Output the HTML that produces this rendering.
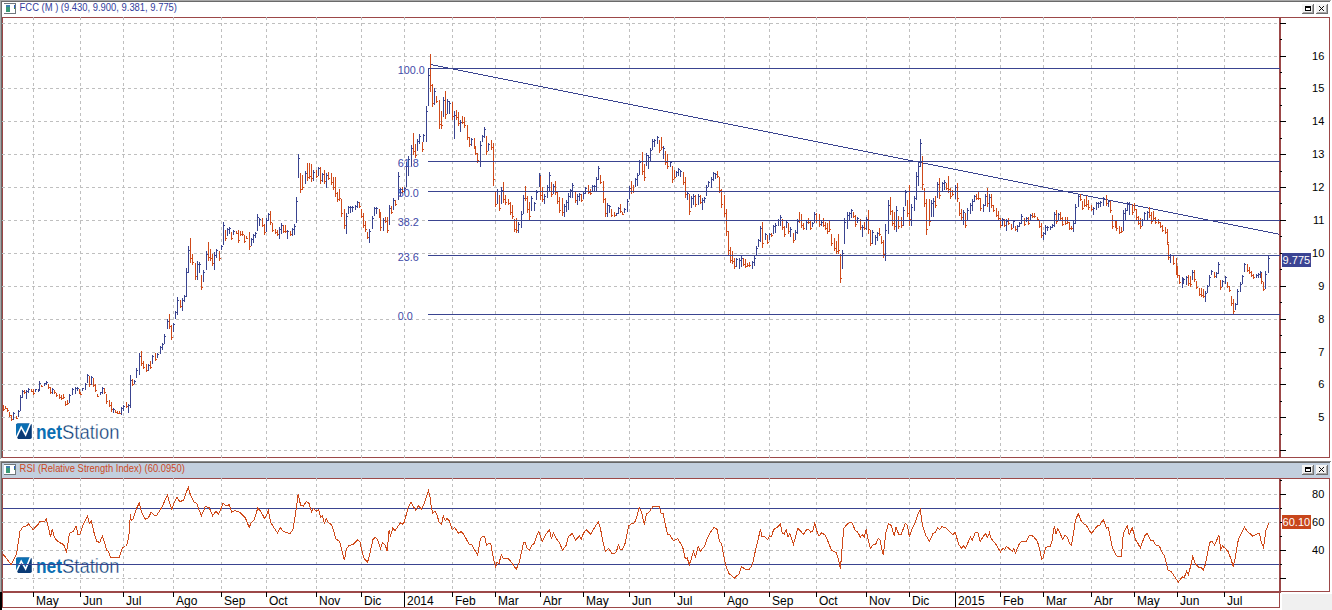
<!DOCTYPE html><html><head><meta charset="utf-8"><title>FCC chart</title>
<style>html,body{margin:0;padding:0;background:#fff;}body{width:1332px;height:610px;overflow:hidden;}svg{display:block;}text{font-family:"Liberation Sans", Arial, sans-serif;}</style></head><body>
<svg width="1332" height="610" viewBox="0 0 1332 610">
<rect width="1332" height="610" fill="#fff"/>
<rect x="1282" y="594" width="50" height="16" fill="#f0f0f0"/>
<g transform="translate(16,423.5)">
<path d="M1.6 0H14.2Q15.8 0 15.8 1.6V13.8Q15.8 15.4 14.2 15.4H1.9L0 12.4V1.6Q0 0 1.6 0Z" fill="#0a3b76"/>
<path d="M1.6 0H14.5L9.6 11.5L5.2 3.7L1.1 12.4L0 12.4V1.6Q0 0 1.6 0Z" fill="#0b6fb3"/>
<path d="M-0.4 15.6L5.2 3.7L9.6 11.5L14.6 -0.6" stroke="#fff" stroke-width="1.6" fill="none" stroke-linejoin="miter"/>
<path d="M-1 11.8L2.4 16.5H-1Z" fill="#fff"/>
</g>
<text x="36" y="438.6" font-size="20.5" font-weight="bold" fill="#0b6fb3" textLength="26" lengthAdjust="spacingAndGlyphs">net</text>
<text x="62" y="438.6" font-size="20.5" fill="#0a3b76" stroke="#fff" stroke-width="0.35" textLength="57.5" lengthAdjust="spacingAndGlyphs">Station</text>
<g transform="translate(16,557.5)">
<path d="M1.6 0H14.2Q15.8 0 15.8 1.6V13.8Q15.8 15.4 14.2 15.4H1.9L0 12.4V1.6Q0 0 1.6 0Z" fill="#0a3b76"/>
<path d="M1.6 0H14.5L9.6 11.5L5.2 3.7L1.1 12.4L0 12.4V1.6Q0 0 1.6 0Z" fill="#0b6fb3"/>
<path d="M-0.4 15.6L5.2 3.7L9.6 11.5L14.6 -0.6" stroke="#fff" stroke-width="1.6" fill="none" stroke-linejoin="miter"/>
<path d="M-1 11.8L2.4 16.5H-1Z" fill="#fff"/>
</g>
<text x="36" y="572.6" font-size="20.5" font-weight="bold" fill="#0b6fb3" textLength="26" lengthAdjust="spacingAndGlyphs">net</text>
<text x="62" y="572.6" font-size="20.5" fill="#0a3b76" stroke="#fff" stroke-width="0.35" textLength="57.5" lengthAdjust="spacingAndGlyphs">Station</text>
<g shape-rendering="crispEdges">
<rect x="0" y="0" width="1331" height="1" fill="#a8a8a8"/><rect x="1" y="1" width="1329" height="1" fill="#6a6a6a"/>
<rect x="0" y="0" width="1" height="459" fill="#a8a8a8"/><rect x="1" y="1" width="1" height="457" fill="#6a6a6a"/>
<rect x="0" y="461" width="1331" height="1" fill="#8a8a8a"/><rect x="1" y="462" width="1329" height="1" fill="#666"/>
<rect x="0" y="461" width="1" height="131" fill="#a8a8a8"/><rect x="1" y="462" width="1" height="130" fill="#6a6a6a"/>
<rect x="0" y="592" width="2" height="18" fill="#000"/>
<rect x="2" y="463" width="1328" height="15" fill="#c2cfde"/>
<rect x="2" y="17" width="1328" height="1" fill="#9c4848"/>
<rect x="2" y="457" width="1328" height="1" fill="#9c4848"/>
<rect x="2" y="17" width="1" height="441" fill="#9c4848"/>
<rect x="1329" y="17" width="1" height="441" fill="#9c4848"/>
<rect x="2" y="478" width="1328" height="1" fill="#9c4848"/>
<rect x="2" y="478" width="1" height="130" fill="#9c4848"/>
<rect x="1329" y="478" width="1" height="114" fill="#9c4848"/>
<rect x="2" y="591" width="1328" height="1" fill="#9c4848"/>
<rect x="2" y="592" width="1279" height="1" fill="#9c4848"/>
<rect x="2" y="607" width="1278" height="1" fill="#9c4848"/>
<rect x="1279" y="592" width="1" height="16" fill="#9c4848"/>
<line x1="2" y1="23.5" x2="1279" y2="23.5" stroke="#bfbfbf" stroke-dasharray="3 3" stroke-dashoffset="0"/>
<line x1="2" y1="56.5" x2="1279" y2="56.5" stroke="#bfbfbf" stroke-dasharray="3 3" stroke-dashoffset="0"/>
<line x1="2" y1="88.5" x2="1279" y2="88.5" stroke="#bfbfbf" stroke-dasharray="3 3" stroke-dashoffset="0"/>
<line x1="2" y1="121.5" x2="1279" y2="121.5" stroke="#bfbfbf" stroke-dasharray="3 3" stroke-dashoffset="0"/>
<line x1="2" y1="154.5" x2="1279" y2="154.5" stroke="#bfbfbf" stroke-dasharray="3 3" stroke-dashoffset="0"/>
<line x1="2" y1="187.5" x2="1279" y2="187.5" stroke="#bfbfbf" stroke-dasharray="3 3" stroke-dashoffset="0"/>
<line x1="2" y1="220.5" x2="1279" y2="220.5" stroke="#bfbfbf" stroke-dasharray="3 3" stroke-dashoffset="0"/>
<line x1="2" y1="253.5" x2="1279" y2="253.5" stroke="#bfbfbf" stroke-dasharray="3 3" stroke-dashoffset="0"/>
<line x1="2" y1="286.5" x2="1279" y2="286.5" stroke="#bfbfbf" stroke-dasharray="3 3" stroke-dashoffset="0"/>
<line x1="2" y1="319.5" x2="1279" y2="319.5" stroke="#bfbfbf" stroke-dasharray="3 3" stroke-dashoffset="0"/>
<line x1="2" y1="352.5" x2="1279" y2="352.5" stroke="#bfbfbf" stroke-dasharray="3 3" stroke-dashoffset="0"/>
<line x1="2" y1="384.5" x2="1279" y2="384.5" stroke="#bfbfbf" stroke-dasharray="3 3" stroke-dashoffset="0"/>
<line x1="2" y1="417.5" x2="1279" y2="417.5" stroke="#bfbfbf" stroke-dasharray="3 3" stroke-dashoffset="0"/>
<line x1="2" y1="450.5" x2="1279" y2="450.5" stroke="#bfbfbf" stroke-dasharray="3 3" stroke-dashoffset="0"/>
<line x1="33.5" y1="17" x2="33.5" y2="458" stroke="#bfbfbf" stroke-dasharray="3 3" stroke-dashoffset="0"/>
<line x1="33.5" y1="478" x2="33.5" y2="592" stroke="#bfbfbf" stroke-dasharray="3 3" stroke-dashoffset="0"/>
<line x1="80.5" y1="17" x2="80.5" y2="458" stroke="#bfbfbf" stroke-dasharray="3 3" stroke-dashoffset="0"/>
<line x1="80.5" y1="478" x2="80.5" y2="592" stroke="#bfbfbf" stroke-dasharray="3 3" stroke-dashoffset="0"/>
<line x1="123.5" y1="17" x2="123.5" y2="458" stroke="#bfbfbf" stroke-dasharray="3 3" stroke-dashoffset="0"/>
<line x1="123.5" y1="478" x2="123.5" y2="592" stroke="#bfbfbf" stroke-dasharray="3 3" stroke-dashoffset="0"/>
<line x1="173.5" y1="17" x2="173.5" y2="458" stroke="#bfbfbf" stroke-dasharray="3 3" stroke-dashoffset="0"/>
<line x1="173.5" y1="478" x2="173.5" y2="592" stroke="#bfbfbf" stroke-dasharray="3 3" stroke-dashoffset="0"/>
<line x1="221.5" y1="17" x2="221.5" y2="458" stroke="#bfbfbf" stroke-dasharray="3 3" stroke-dashoffset="0"/>
<line x1="221.5" y1="478" x2="221.5" y2="592" stroke="#bfbfbf" stroke-dasharray="3 3" stroke-dashoffset="0"/>
<line x1="266.5" y1="17" x2="266.5" y2="458" stroke="#bfbfbf" stroke-dasharray="3 3" stroke-dashoffset="0"/>
<line x1="266.5" y1="478" x2="266.5" y2="592" stroke="#bfbfbf" stroke-dasharray="3 3" stroke-dashoffset="0"/>
<line x1="316.5" y1="17" x2="316.5" y2="458" stroke="#bfbfbf" stroke-dasharray="3 3" stroke-dashoffset="0"/>
<line x1="316.5" y1="478" x2="316.5" y2="592" stroke="#bfbfbf" stroke-dasharray="3 3" stroke-dashoffset="0"/>
<line x1="361.5" y1="17" x2="361.5" y2="458" stroke="#bfbfbf" stroke-dasharray="3 3" stroke-dashoffset="0"/>
<line x1="361.5" y1="478" x2="361.5" y2="592" stroke="#bfbfbf" stroke-dasharray="3 3" stroke-dashoffset="0"/>
<line x1="404.5" y1="17" x2="404.5" y2="458" stroke="#bfbfbf" stroke-dasharray="3 3" stroke-dashoffset="0"/>
<line x1="404.5" y1="478" x2="404.5" y2="592" stroke="#bfbfbf" stroke-dasharray="3 3" stroke-dashoffset="0"/>
<line x1="452.5" y1="17" x2="452.5" y2="458" stroke="#bfbfbf" stroke-dasharray="3 3" stroke-dashoffset="0"/>
<line x1="452.5" y1="478" x2="452.5" y2="592" stroke="#bfbfbf" stroke-dasharray="3 3" stroke-dashoffset="0"/>
<line x1="495.5" y1="17" x2="495.5" y2="458" stroke="#bfbfbf" stroke-dasharray="3 3" stroke-dashoffset="0"/>
<line x1="495.5" y1="478" x2="495.5" y2="592" stroke="#bfbfbf" stroke-dasharray="3 3" stroke-dashoffset="0"/>
<line x1="540.5" y1="17" x2="540.5" y2="458" stroke="#bfbfbf" stroke-dasharray="3 3" stroke-dashoffset="0"/>
<line x1="540.5" y1="478" x2="540.5" y2="592" stroke="#bfbfbf" stroke-dasharray="3 3" stroke-dashoffset="0"/>
<line x1="583.5" y1="17" x2="583.5" y2="458" stroke="#bfbfbf" stroke-dasharray="3 3" stroke-dashoffset="0"/>
<line x1="583.5" y1="478" x2="583.5" y2="592" stroke="#bfbfbf" stroke-dasharray="3 3" stroke-dashoffset="0"/>
<line x1="629.5" y1="17" x2="629.5" y2="458" stroke="#bfbfbf" stroke-dasharray="3 3" stroke-dashoffset="0"/>
<line x1="629.5" y1="478" x2="629.5" y2="592" stroke="#bfbfbf" stroke-dasharray="3 3" stroke-dashoffset="0"/>
<line x1="674.5" y1="17" x2="674.5" y2="458" stroke="#bfbfbf" stroke-dasharray="3 3" stroke-dashoffset="0"/>
<line x1="674.5" y1="478" x2="674.5" y2="592" stroke="#bfbfbf" stroke-dasharray="3 3" stroke-dashoffset="0"/>
<line x1="724.5" y1="17" x2="724.5" y2="458" stroke="#bfbfbf" stroke-dasharray="3 3" stroke-dashoffset="0"/>
<line x1="724.5" y1="478" x2="724.5" y2="592" stroke="#bfbfbf" stroke-dasharray="3 3" stroke-dashoffset="0"/>
<line x1="769.5" y1="17" x2="769.5" y2="458" stroke="#bfbfbf" stroke-dasharray="3 3" stroke-dashoffset="0"/>
<line x1="769.5" y1="478" x2="769.5" y2="592" stroke="#bfbfbf" stroke-dasharray="3 3" stroke-dashoffset="0"/>
<line x1="816.5" y1="17" x2="816.5" y2="458" stroke="#bfbfbf" stroke-dasharray="3 3" stroke-dashoffset="0"/>
<line x1="816.5" y1="478" x2="816.5" y2="592" stroke="#bfbfbf" stroke-dasharray="3 3" stroke-dashoffset="0"/>
<line x1="866.5" y1="17" x2="866.5" y2="458" stroke="#bfbfbf" stroke-dasharray="3 3" stroke-dashoffset="0"/>
<line x1="866.5" y1="478" x2="866.5" y2="592" stroke="#bfbfbf" stroke-dasharray="3 3" stroke-dashoffset="0"/>
<line x1="909.5" y1="17" x2="909.5" y2="458" stroke="#bfbfbf" stroke-dasharray="3 3" stroke-dashoffset="0"/>
<line x1="909.5" y1="478" x2="909.5" y2="592" stroke="#bfbfbf" stroke-dasharray="3 3" stroke-dashoffset="0"/>
<line x1="955.5" y1="17" x2="955.5" y2="458" stroke="#bfbfbf" stroke-dasharray="3 3" stroke-dashoffset="0"/>
<line x1="955.5" y1="478" x2="955.5" y2="592" stroke="#bfbfbf" stroke-dasharray="3 3" stroke-dashoffset="0"/>
<line x1="1000.5" y1="17" x2="1000.5" y2="458" stroke="#bfbfbf" stroke-dasharray="3 3" stroke-dashoffset="0"/>
<line x1="1000.5" y1="478" x2="1000.5" y2="592" stroke="#bfbfbf" stroke-dasharray="3 3" stroke-dashoffset="0"/>
<line x1="1043.5" y1="17" x2="1043.5" y2="458" stroke="#bfbfbf" stroke-dasharray="3 3" stroke-dashoffset="0"/>
<line x1="1043.5" y1="478" x2="1043.5" y2="592" stroke="#bfbfbf" stroke-dasharray="3 3" stroke-dashoffset="0"/>
<line x1="1091.5" y1="17" x2="1091.5" y2="458" stroke="#bfbfbf" stroke-dasharray="3 3" stroke-dashoffset="0"/>
<line x1="1091.5" y1="478" x2="1091.5" y2="592" stroke="#bfbfbf" stroke-dasharray="3 3" stroke-dashoffset="0"/>
<line x1="1134.5" y1="17" x2="1134.5" y2="458" stroke="#bfbfbf" stroke-dasharray="3 3" stroke-dashoffset="0"/>
<line x1="1134.5" y1="478" x2="1134.5" y2="592" stroke="#bfbfbf" stroke-dasharray="3 3" stroke-dashoffset="0"/>
<line x1="1177.5" y1="17" x2="1177.5" y2="458" stroke="#bfbfbf" stroke-dasharray="3 3" stroke-dashoffset="0"/>
<line x1="1177.5" y1="478" x2="1177.5" y2="592" stroke="#bfbfbf" stroke-dasharray="3 3" stroke-dashoffset="0"/>
<line x1="1224.5" y1="17" x2="1224.5" y2="458" stroke="#bfbfbf" stroke-dasharray="3 3" stroke-dashoffset="0"/>
<line x1="1224.5" y1="478" x2="1224.5" y2="592" stroke="#bfbfbf" stroke-dasharray="3 3" stroke-dashoffset="0"/>
<line x1="2" y1="494.5" x2="1279" y2="494.5" stroke="#bfbfbf" stroke-dasharray="3 3"/>
<line x1="2" y1="522.5" x2="1279" y2="522.5" stroke="#bfbfbf" stroke-dasharray="3 3"/>
<line x1="2" y1="550.5" x2="1279" y2="550.5" stroke="#bfbfbf" stroke-dasharray="3 3"/>
<line x1="2" y1="578.5" x2="1279" y2="578.5" stroke="#bfbfbf" stroke-dasharray="3 3"/>
<rect x="1279" y="17" width="2" height="441" fill="#9c4848"/>
<rect x="1279" y="478" width="2" height="114" fill="#9c4848"/>
<rect x="1280" y="23" width="6" height="1" fill="#000"/>
<rect x="1280" y="56" width="6" height="1" fill="#000"/>
<rect x="1280" y="88" width="6" height="1" fill="#000"/>
<rect x="1280" y="121" width="6" height="1" fill="#000"/>
<rect x="1280" y="154" width="6" height="1" fill="#000"/>
<rect x="1280" y="187" width="6" height="1" fill="#000"/>
<rect x="1280" y="220" width="6" height="1" fill="#000"/>
<rect x="1280" y="253" width="6" height="1" fill="#000"/>
<rect x="1280" y="286" width="6" height="1" fill="#000"/>
<rect x="1280" y="319" width="6" height="1" fill="#000"/>
<rect x="1280" y="352" width="6" height="1" fill="#000"/>
<rect x="1280" y="384" width="6" height="1" fill="#000"/>
<rect x="1280" y="417" width="6" height="1" fill="#000"/>
<rect x="1280" y="450" width="6" height="1" fill="#000"/>
<rect x="1280" y="434" width="2" height="1" fill="#000"/>
<rect x="1280" y="401" width="2" height="1" fill="#000"/>
<rect x="1280" y="368" width="2" height="1" fill="#000"/>
<rect x="1280" y="335" width="2" height="1" fill="#000"/>
<rect x="1280" y="302" width="2" height="1" fill="#000"/>
<rect x="1280" y="269" width="2" height="1" fill="#000"/>
<rect x="1280" y="236" width="2" height="1" fill="#000"/>
<rect x="1280" y="203" width="2" height="1" fill="#000"/>
<rect x="1280" y="171" width="2" height="1" fill="#000"/>
<rect x="1280" y="138" width="2" height="1" fill="#000"/>
<rect x="1280" y="105" width="2" height="1" fill="#000"/>
<rect x="1280" y="72" width="2" height="1" fill="#000"/>
<rect x="1280" y="39" width="2" height="1" fill="#000"/>
<rect x="1280" y="494" width="6" height="1" fill="#000"/>
<rect x="1280" y="522" width="6" height="1" fill="#000"/>
<rect x="1280" y="550" width="6" height="1" fill="#000"/>
<rect x="1280" y="578" width="6" height="1" fill="#000"/>
<rect x="1280" y="480" width="2" height="1" fill="#000"/>
<rect x="1280" y="508" width="2" height="1" fill="#000"/>
<rect x="1280" y="536" width="2" height="1" fill="#000"/>
<rect x="1280" y="564" width="2" height="1" fill="#000"/>
<rect x="33" y="592" width="1" height="5" fill="#000"/>
<rect x="80" y="592" width="1" height="5" fill="#000"/>
<rect x="123" y="592" width="1" height="5" fill="#000"/>
<rect x="173" y="592" width="1" height="5" fill="#000"/>
<rect x="221" y="592" width="1" height="5" fill="#000"/>
<rect x="266" y="592" width="1" height="5" fill="#000"/>
<rect x="316" y="592" width="1" height="5" fill="#000"/>
<rect x="361" y="592" width="1" height="5" fill="#000"/>
<rect x="404" y="592" width="1" height="15" fill="#000"/>
<rect x="452" y="592" width="1" height="5" fill="#000"/>
<rect x="495" y="592" width="1" height="5" fill="#000"/>
<rect x="540" y="592" width="1" height="5" fill="#000"/>
<rect x="583" y="592" width="1" height="5" fill="#000"/>
<rect x="629" y="592" width="1" height="5" fill="#000"/>
<rect x="674" y="592" width="1" height="5" fill="#000"/>
<rect x="724" y="592" width="1" height="5" fill="#000"/>
<rect x="769" y="592" width="1" height="5" fill="#000"/>
<rect x="816" y="592" width="1" height="5" fill="#000"/>
<rect x="866" y="592" width="1" height="5" fill="#000"/>
<rect x="909" y="592" width="1" height="5" fill="#000"/>
<rect x="955" y="592" width="1" height="15" fill="#000"/>
<rect x="1000" y="592" width="1" height="5" fill="#000"/>
<rect x="1043" y="592" width="1" height="5" fill="#000"/>
<rect x="1091" y="592" width="1" height="5" fill="#000"/>
<rect x="1134" y="592" width="1" height="5" fill="#000"/>
<rect x="1177" y="592" width="1" height="5" fill="#000"/>
<rect x="1224" y="592" width="1" height="5" fill="#000"/>
<rect x="3" y="508" width="1276" height="1" fill="#3a4490"/>
<rect x="3" y="564" width="1276" height="1" fill="#3a4490"/>
<rect x="430" y="64" width="3" height="1" fill="#3a4490"/>
<rect x="433" y="65" width="5" height="1" fill="#3a4490"/>
<rect x="438" y="66" width="5" height="1" fill="#3a4490"/>
<rect x="443" y="67" width="5" height="1" fill="#3a4490"/>
<rect x="448" y="68" width="5" height="1" fill="#3a4490"/>
<rect x="453" y="69" width="5" height="1" fill="#3a4490"/>
<rect x="458" y="70" width="5" height="1" fill="#3a4490"/>
<rect x="463" y="71" width="5" height="1" fill="#3a4490"/>
<rect x="468" y="72" width="5" height="1" fill="#3a4490"/>
<rect x="473" y="73" width="5" height="1" fill="#3a4490"/>
<rect x="478" y="74" width="5" height="1" fill="#3a4490"/>
<rect x="483" y="75" width="5" height="1" fill="#3a4490"/>
<rect x="488" y="76" width="5" height="1" fill="#3a4490"/>
<rect x="493" y="77" width="5" height="1" fill="#3a4490"/>
<rect x="498" y="78" width="5" height="1" fill="#3a4490"/>
<rect x="503" y="79" width="5" height="1" fill="#3a4490"/>
<rect x="508" y="80" width="5" height="1" fill="#3a4490"/>
<rect x="513" y="81" width="5" height="1" fill="#3a4490"/>
<rect x="518" y="82" width="5" height="1" fill="#3a4490"/>
<rect x="523" y="83" width="5" height="1" fill="#3a4490"/>
<rect x="528" y="84" width="5" height="1" fill="#3a4490"/>
<rect x="533" y="85" width="5" height="1" fill="#3a4490"/>
<rect x="538" y="86" width="5" height="1" fill="#3a4490"/>
<rect x="543" y="87" width="5" height="1" fill="#3a4490"/>
<rect x="548" y="88" width="5" height="1" fill="#3a4490"/>
<rect x="553" y="89" width="5" height="1" fill="#3a4490"/>
<rect x="558" y="90" width="5" height="1" fill="#3a4490"/>
<rect x="563" y="91" width="5" height="1" fill="#3a4490"/>
<rect x="568" y="92" width="5" height="1" fill="#3a4490"/>
<rect x="573" y="93" width="5" height="1" fill="#3a4490"/>
<rect x="578" y="94" width="5" height="1" fill="#3a4490"/>
<rect x="583" y="95" width="5" height="1" fill="#3a4490"/>
<rect x="588" y="96" width="5" height="1" fill="#3a4490"/>
<rect x="593" y="97" width="5" height="1" fill="#3a4490"/>
<rect x="598" y="98" width="5" height="1" fill="#3a4490"/>
<rect x="603" y="99" width="5" height="1" fill="#3a4490"/>
<rect x="608" y="100" width="5" height="1" fill="#3a4490"/>
<rect x="613" y="101" width="5" height="1" fill="#3a4490"/>
<rect x="618" y="102" width="5" height="1" fill="#3a4490"/>
<rect x="623" y="103" width="5" height="1" fill="#3a4490"/>
<rect x="628" y="104" width="5" height="1" fill="#3a4490"/>
<rect x="633" y="105" width="5" height="1" fill="#3a4490"/>
<rect x="638" y="106" width="5" height="1" fill="#3a4490"/>
<rect x="643" y="107" width="5" height="1" fill="#3a4490"/>
<rect x="648" y="108" width="5" height="1" fill="#3a4490"/>
<rect x="653" y="109" width="5" height="1" fill="#3a4490"/>
<rect x="658" y="110" width="5" height="1" fill="#3a4490"/>
<rect x="663" y="111" width="5" height="1" fill="#3a4490"/>
<rect x="668" y="112" width="5" height="1" fill="#3a4490"/>
<rect x="673" y="113" width="5" height="1" fill="#3a4490"/>
<rect x="678" y="114" width="5" height="1" fill="#3a4490"/>
<rect x="683" y="115" width="5" height="1" fill="#3a4490"/>
<rect x="688" y="116" width="5" height="1" fill="#3a4490"/>
<rect x="693" y="117" width="5" height="1" fill="#3a4490"/>
<rect x="698" y="118" width="5" height="1" fill="#3a4490"/>
<rect x="703" y="119" width="5" height="1" fill="#3a4490"/>
<rect x="708" y="120" width="5" height="1" fill="#3a4490"/>
<rect x="713" y="121" width="5" height="1" fill="#3a4490"/>
<rect x="718" y="122" width="5" height="1" fill="#3a4490"/>
<rect x="723" y="123" width="5" height="1" fill="#3a4490"/>
<rect x="728" y="124" width="5" height="1" fill="#3a4490"/>
<rect x="733" y="125" width="5" height="1" fill="#3a4490"/>
<rect x="738" y="126" width="5" height="1" fill="#3a4490"/>
<rect x="743" y="127" width="5" height="1" fill="#3a4490"/>
<rect x="748" y="128" width="5" height="1" fill="#3a4490"/>
<rect x="753" y="129" width="5" height="1" fill="#3a4490"/>
<rect x="758" y="130" width="5" height="1" fill="#3a4490"/>
<rect x="763" y="131" width="5" height="1" fill="#3a4490"/>
<rect x="768" y="132" width="5" height="1" fill="#3a4490"/>
<rect x="773" y="133" width="5" height="1" fill="#3a4490"/>
<rect x="778" y="134" width="5" height="1" fill="#3a4490"/>
<rect x="783" y="135" width="5" height="1" fill="#3a4490"/>
<rect x="788" y="136" width="5" height="1" fill="#3a4490"/>
<rect x="793" y="137" width="5" height="1" fill="#3a4490"/>
<rect x="798" y="138" width="5" height="1" fill="#3a4490"/>
<rect x="803" y="139" width="5" height="1" fill="#3a4490"/>
<rect x="808" y="140" width="5" height="1" fill="#3a4490"/>
<rect x="813" y="141" width="5" height="1" fill="#3a4490"/>
<rect x="818" y="142" width="5" height="1" fill="#3a4490"/>
<rect x="823" y="143" width="5" height="1" fill="#3a4490"/>
<rect x="828" y="144" width="5" height="1" fill="#3a4490"/>
<rect x="833" y="145" width="5" height="1" fill="#3a4490"/>
<rect x="838" y="146" width="5" height="1" fill="#3a4490"/>
<rect x="843" y="147" width="5" height="1" fill="#3a4490"/>
<rect x="848" y="148" width="5" height="1" fill="#3a4490"/>
<rect x="853" y="149" width="5" height="1" fill="#3a4490"/>
<rect x="858" y="150" width="5" height="1" fill="#3a4490"/>
<rect x="863" y="151" width="5" height="1" fill="#3a4490"/>
<rect x="868" y="152" width="5" height="1" fill="#3a4490"/>
<rect x="873" y="153" width="5" height="1" fill="#3a4490"/>
<rect x="878" y="154" width="5" height="1" fill="#3a4490"/>
<rect x="883" y="155" width="5" height="1" fill="#3a4490"/>
<rect x="888" y="156" width="5" height="1" fill="#3a4490"/>
<rect x="893" y="157" width="5" height="1" fill="#3a4490"/>
<rect x="898" y="158" width="5" height="1" fill="#3a4490"/>
<rect x="903" y="159" width="5" height="1" fill="#3a4490"/>
<rect x="908" y="160" width="5" height="1" fill="#3a4490"/>
<rect x="913" y="161" width="5" height="1" fill="#3a4490"/>
<rect x="918" y="162" width="5" height="1" fill="#3a4490"/>
<rect x="923" y="163" width="5" height="1" fill="#3a4490"/>
<rect x="928" y="164" width="5" height="1" fill="#3a4490"/>
<rect x="933" y="165" width="5" height="1" fill="#3a4490"/>
<rect x="938" y="166" width="5" height="1" fill="#3a4490"/>
<rect x="943" y="167" width="5" height="1" fill="#3a4490"/>
<rect x="948" y="168" width="5" height="1" fill="#3a4490"/>
<rect x="953" y="169" width="5" height="1" fill="#3a4490"/>
<rect x="958" y="170" width="5" height="1" fill="#3a4490"/>
<rect x="963" y="171" width="5" height="1" fill="#3a4490"/>
<rect x="968" y="172" width="5" height="1" fill="#3a4490"/>
<rect x="973" y="173" width="5" height="1" fill="#3a4490"/>
<rect x="978" y="174" width="5" height="1" fill="#3a4490"/>
<rect x="983" y="175" width="5" height="1" fill="#3a4490"/>
<rect x="988" y="176" width="5" height="1" fill="#3a4490"/>
<rect x="993" y="177" width="5" height="1" fill="#3a4490"/>
<rect x="998" y="178" width="5" height="1" fill="#3a4490"/>
<rect x="1003" y="179" width="5" height="1" fill="#3a4490"/>
<rect x="1008" y="180" width="5" height="1" fill="#3a4490"/>
<rect x="1013" y="181" width="5" height="1" fill="#3a4490"/>
<rect x="1018" y="182" width="5" height="1" fill="#3a4490"/>
<rect x="1023" y="183" width="5" height="1" fill="#3a4490"/>
<rect x="1028" y="184" width="5" height="1" fill="#3a4490"/>
<rect x="1033" y="185" width="5" height="1" fill="#3a4490"/>
<rect x="1038" y="186" width="5" height="1" fill="#3a4490"/>
<rect x="1043" y="187" width="5" height="1" fill="#3a4490"/>
<rect x="1048" y="188" width="5" height="1" fill="#3a4490"/>
<rect x="1053" y="189" width="5" height="1" fill="#3a4490"/>
<rect x="1058" y="190" width="5" height="1" fill="#3a4490"/>
<rect x="1063" y="191" width="5" height="1" fill="#3a4490"/>
<rect x="1068" y="192" width="5" height="1" fill="#3a4490"/>
<rect x="1073" y="193" width="5" height="1" fill="#3a4490"/>
<rect x="1078" y="194" width="5" height="1" fill="#3a4490"/>
<rect x="1083" y="195" width="5" height="1" fill="#3a4490"/>
<rect x="1088" y="196" width="5" height="1" fill="#3a4490"/>
<rect x="1093" y="197" width="5" height="1" fill="#3a4490"/>
<rect x="1098" y="198" width="5" height="1" fill="#3a4490"/>
<rect x="1103" y="199" width="5" height="1" fill="#3a4490"/>
<rect x="1108" y="200" width="5" height="1" fill="#3a4490"/>
<rect x="1113" y="201" width="5" height="1" fill="#3a4490"/>
<rect x="1118" y="202" width="5" height="1" fill="#3a4490"/>
<rect x="1123" y="203" width="5" height="1" fill="#3a4490"/>
<rect x="1128" y="204" width="5" height="1" fill="#3a4490"/>
<rect x="1133" y="205" width="5" height="1" fill="#3a4490"/>
<rect x="1138" y="206" width="5" height="1" fill="#3a4490"/>
<rect x="1143" y="207" width="5" height="1" fill="#3a4490"/>
<rect x="1148" y="208" width="5" height="1" fill="#3a4490"/>
<rect x="1153" y="209" width="5" height="1" fill="#3a4490"/>
<rect x="1158" y="210" width="5" height="1" fill="#3a4490"/>
<rect x="1163" y="211" width="5" height="1" fill="#3a4490"/>
<rect x="1168" y="212" width="5" height="1" fill="#3a4490"/>
<rect x="1173" y="213" width="5" height="1" fill="#3a4490"/>
<rect x="1178" y="214" width="5" height="1" fill="#3a4490"/>
<rect x="1183" y="215" width="5" height="1" fill="#3a4490"/>
<rect x="1188" y="216" width="5" height="1" fill="#3a4490"/>
<rect x="1193" y="217" width="5" height="1" fill="#3a4490"/>
<rect x="1198" y="218" width="5" height="1" fill="#3a4490"/>
<rect x="1203" y="219" width="5" height="1" fill="#3a4490"/>
<rect x="1208" y="220" width="5" height="1" fill="#3a4490"/>
<rect x="1213" y="221" width="5" height="1" fill="#3a4490"/>
<rect x="1218" y="222" width="5" height="1" fill="#3a4490"/>
<rect x="1223" y="223" width="5" height="1" fill="#3a4490"/>
<rect x="1228" y="224" width="5" height="1" fill="#3a4490"/>
<rect x="1233" y="225" width="5" height="1" fill="#3a4490"/>
<rect x="1238" y="226" width="5" height="1" fill="#3a4490"/>
<rect x="1243" y="227" width="5" height="1" fill="#3a4490"/>
<rect x="1248" y="228" width="5" height="1" fill="#3a4490"/>
<rect x="1253" y="229" width="5" height="1" fill="#3a4490"/>
<rect x="1258" y="230" width="5" height="1" fill="#3a4490"/>
<rect x="1263" y="231" width="5" height="1" fill="#3a4490"/>
<rect x="1268" y="232" width="5" height="1" fill="#3a4490"/>
<rect x="1273" y="233" width="5" height="1" fill="#3a4490"/>
<rect x="1278" y="234" width="1" height="1" fill="#3a4490"/>
<rect x="3" y="405" width="1" height="6" fill="#cf4a1a"/>
<rect x="4" y="409" width="1" height="1" fill="#cf4a1a"/>
<rect x="5" y="406" width="1" height="3" fill="#cf4a1a"/>
<rect x="6" y="408" width="1" height="1" fill="#cf4a1a"/>
<rect x="7" y="408" width="1" height="4" fill="#cf4a1a"/>
<rect x="8" y="410" width="1" height="1" fill="#cf4a1a"/>
<rect x="9" y="412" width="1" height="5" fill="#cf4a1a"/>
<rect x="10" y="415" width="1" height="1" fill="#cf4a1a"/>
<rect x="11" y="415" width="1" height="6" fill="#cf4a1a"/>
<rect x="12" y="419" width="1" height="1" fill="#cf4a1a"/>
<rect x="13" y="412" width="1" height="8" fill="#3a4490"/>
<rect x="14" y="413" width="1" height="1" fill="#3a4490"/>
<rect x="16" y="416" width="1" height="3" fill="#cf4a1a"/>
<rect x="17" y="418" width="1" height="1" fill="#cf4a1a"/>
<rect x="18" y="410" width="1" height="7" fill="#3a4490"/>
<rect x="19" y="411" width="1" height="1" fill="#3a4490"/>
<rect x="20" y="395" width="1" height="16" fill="#3a4490"/>
<rect x="21" y="397" width="1" height="1" fill="#3a4490"/>
<rect x="22" y="390" width="1" height="8" fill="#3a4490"/>
<rect x="23" y="391" width="1" height="1" fill="#3a4490"/>
<rect x="24" y="390" width="1" height="4" fill="#cf4a1a"/>
<rect x="25" y="392" width="1" height="1" fill="#cf4a1a"/>
<rect x="26" y="390" width="1" height="9" fill="#3a4490"/>
<rect x="27" y="391" width="1" height="1" fill="#3a4490"/>
<rect x="28" y="388" width="1" height="5" fill="#3a4490"/>
<rect x="29" y="389" width="1" height="1" fill="#3a4490"/>
<rect x="31" y="389" width="1" height="3" fill="#cf4a1a"/>
<rect x="32" y="391" width="1" height="1" fill="#cf4a1a"/>
<rect x="33" y="389" width="1" height="6" fill="#cf4a1a"/>
<rect x="34" y="393" width="1" height="1" fill="#cf4a1a"/>
<rect x="35" y="389" width="1" height="3" fill="#3a4490"/>
<rect x="36" y="389" width="1" height="1" fill="#3a4490"/>
<rect x="38" y="389" width="1" height="3" fill="#3a4490"/>
<rect x="39" y="389" width="1" height="1" fill="#3a4490"/>
<rect x="39" y="381" width="1" height="10" fill="#3a4490"/>
<rect x="40" y="383" width="1" height="1" fill="#3a4490"/>
<rect x="41" y="385" width="1" height="2" fill="#cf4a1a"/>
<rect x="42" y="386" width="1" height="1" fill="#cf4a1a"/>
<rect x="44" y="383" width="1" height="3" fill="#3a4490"/>
<rect x="45" y="383" width="1" height="1" fill="#3a4490"/>
<rect x="46" y="381" width="1" height="4" fill="#3a4490"/>
<rect x="47" y="382" width="1" height="1" fill="#3a4490"/>
<rect x="48" y="384" width="1" height="5" fill="#cf4a1a"/>
<rect x="49" y="387" width="1" height="1" fill="#cf4a1a"/>
<rect x="50" y="387" width="1" height="7" fill="#cf4a1a"/>
<rect x="51" y="392" width="1" height="1" fill="#cf4a1a"/>
<rect x="52" y="388" width="1" height="6" fill="#3a4490"/>
<rect x="53" y="389" width="1" height="1" fill="#3a4490"/>
<rect x="54" y="390" width="1" height="4" fill="#cf4a1a"/>
<rect x="55" y="392" width="1" height="1" fill="#cf4a1a"/>
<rect x="56" y="393" width="1" height="4" fill="#cf4a1a"/>
<rect x="57" y="395" width="1" height="1" fill="#cf4a1a"/>
<rect x="59" y="394" width="1" height="5" fill="#cf4a1a"/>
<rect x="60" y="397" width="1" height="1" fill="#cf4a1a"/>
<rect x="61" y="395" width="1" height="5" fill="#cf4a1a"/>
<rect x="62" y="398" width="1" height="1" fill="#cf4a1a"/>
<rect x="63" y="394" width="1" height="5" fill="#cf4a1a"/>
<rect x="64" y="397" width="1" height="1" fill="#cf4a1a"/>
<rect x="65" y="401" width="1" height="5" fill="#cf4a1a"/>
<rect x="66" y="404" width="1" height="1" fill="#cf4a1a"/>
<rect x="67" y="400" width="1" height="5" fill="#cf4a1a"/>
<rect x="68" y="403" width="1" height="1" fill="#cf4a1a"/>
<rect x="69" y="394" width="1" height="9" fill="#3a4490"/>
<rect x="70" y="395" width="1" height="1" fill="#3a4490"/>
<rect x="72" y="388" width="1" height="7" fill="#3a4490"/>
<rect x="73" y="389" width="1" height="1" fill="#3a4490"/>
<rect x="75" y="387" width="1" height="7" fill="#3a4490"/>
<rect x="76" y="388" width="1" height="1" fill="#3a4490"/>
<rect x="77" y="387" width="1" height="4" fill="#3a4490"/>
<rect x="78" y="388" width="1" height="1" fill="#3a4490"/>
<rect x="79" y="389" width="1" height="5" fill="#cf4a1a"/>
<rect x="80" y="392" width="1" height="1" fill="#cf4a1a"/>
<rect x="80" y="392" width="1" height="3" fill="#cf4a1a"/>
<rect x="81" y="394" width="1" height="1" fill="#cf4a1a"/>
<rect x="82" y="388" width="1" height="3" fill="#3a4490"/>
<rect x="83" y="388" width="1" height="1" fill="#3a4490"/>
<rect x="85" y="383" width="1" height="7" fill="#3a4490"/>
<rect x="86" y="384" width="1" height="1" fill="#3a4490"/>
<rect x="87" y="374" width="1" height="9" fill="#3a4490"/>
<rect x="88" y="375" width="1" height="1" fill="#3a4490"/>
<rect x="89" y="376" width="1" height="11" fill="#cf4a1a"/>
<rect x="90" y="384" width="1" height="1" fill="#cf4a1a"/>
<rect x="91" y="376" width="1" height="9" fill="#3a4490"/>
<rect x="92" y="377" width="1" height="1" fill="#3a4490"/>
<rect x="93" y="378" width="1" height="9" fill="#cf4a1a"/>
<rect x="94" y="385" width="1" height="1" fill="#cf4a1a"/>
<rect x="95" y="384" width="1" height="8" fill="#cf4a1a"/>
<rect x="96" y="390" width="1" height="1" fill="#cf4a1a"/>
<rect x="97" y="394" width="1" height="3" fill="#cf4a1a"/>
<rect x="98" y="396" width="1" height="1" fill="#cf4a1a"/>
<rect x="100" y="392" width="1" height="3" fill="#3a4490"/>
<rect x="101" y="392" width="1" height="1" fill="#3a4490"/>
<rect x="102" y="387" width="1" height="7" fill="#3a4490"/>
<rect x="103" y="388" width="1" height="1" fill="#3a4490"/>
<rect x="104" y="388" width="1" height="6" fill="#cf4a1a"/>
<rect x="105" y="392" width="1" height="1" fill="#cf4a1a"/>
<rect x="106" y="394" width="1" height="10" fill="#cf4a1a"/>
<rect x="107" y="401" width="1" height="1" fill="#cf4a1a"/>
<rect x="109" y="400" width="1" height="7" fill="#cf4a1a"/>
<rect x="110" y="405" width="1" height="1" fill="#cf4a1a"/>
<rect x="111" y="402" width="1" height="10" fill="#cf4a1a"/>
<rect x="112" y="409" width="1" height="1" fill="#cf4a1a"/>
<rect x="113" y="408" width="1" height="5" fill="#3a4490"/>
<rect x="114" y="409" width="1" height="1" fill="#3a4490"/>
<rect x="115" y="410" width="1" height="3" fill="#cf4a1a"/>
<rect x="116" y="412" width="1" height="1" fill="#cf4a1a"/>
<rect x="117" y="411" width="1" height="3" fill="#cf4a1a"/>
<rect x="118" y="413" width="1" height="1" fill="#cf4a1a"/>
<rect x="119" y="411" width="1" height="3" fill="#cf4a1a"/>
<rect x="120" y="413" width="1" height="1" fill="#cf4a1a"/>
<rect x="121" y="407" width="1" height="8" fill="#3a4490"/>
<rect x="122" y="408" width="1" height="1" fill="#3a4490"/>
<rect x="123" y="405" width="1" height="6" fill="#3a4490"/>
<rect x="124" y="406" width="1" height="1" fill="#3a4490"/>
<rect x="126" y="402" width="1" height="6" fill="#cf4a1a"/>
<rect x="127" y="406" width="1" height="1" fill="#cf4a1a"/>
<rect x="128" y="404" width="1" height="9" fill="#3a4490"/>
<rect x="129" y="405" width="1" height="1" fill="#3a4490"/>
<rect x="130" y="375" width="1" height="33" fill="#3a4490"/>
<rect x="131" y="380" width="1" height="1" fill="#3a4490"/>
<rect x="132" y="379" width="1" height="7" fill="#cf4a1a"/>
<rect x="133" y="384" width="1" height="1" fill="#cf4a1a"/>
<rect x="134" y="380" width="1" height="4" fill="#3a4490"/>
<rect x="135" y="381" width="1" height="1" fill="#3a4490"/>
<rect x="136" y="368" width="1" height="10" fill="#3a4490"/>
<rect x="137" y="370" width="1" height="1" fill="#3a4490"/>
<rect x="139" y="353" width="1" height="22" fill="#3a4490"/>
<rect x="140" y="356" width="1" height="1" fill="#3a4490"/>
<rect x="141" y="351" width="1" height="15" fill="#cf4a1a"/>
<rect x="142" y="363" width="1" height="1" fill="#cf4a1a"/>
<rect x="143" y="361" width="1" height="8" fill="#cf4a1a"/>
<rect x="144" y="367" width="1" height="1" fill="#cf4a1a"/>
<rect x="146" y="364" width="1" height="8" fill="#cf4a1a"/>
<rect x="147" y="370" width="1" height="1" fill="#cf4a1a"/>
<rect x="148" y="364" width="1" height="7" fill="#3a4490"/>
<rect x="149" y="365" width="1" height="1" fill="#3a4490"/>
<rect x="150" y="361" width="1" height="8" fill="#cf4a1a"/>
<rect x="151" y="367" width="1" height="1" fill="#cf4a1a"/>
<rect x="152" y="355" width="1" height="9" fill="#3a4490"/>
<rect x="153" y="356" width="1" height="1" fill="#3a4490"/>
<rect x="155" y="353" width="1" height="8" fill="#cf4a1a"/>
<rect x="156" y="359" width="1" height="1" fill="#cf4a1a"/>
<rect x="157" y="353" width="1" height="5" fill="#3a4490"/>
<rect x="158" y="354" width="1" height="1" fill="#3a4490"/>
<rect x="160" y="346" width="1" height="8" fill="#3a4490"/>
<rect x="161" y="347" width="1" height="1" fill="#3a4490"/>
<rect x="162" y="343" width="1" height="7" fill="#3a4490"/>
<rect x="163" y="344" width="1" height="1" fill="#3a4490"/>
<rect x="164" y="334" width="1" height="10" fill="#3a4490"/>
<rect x="165" y="336" width="1" height="1" fill="#3a4490"/>
<rect x="167" y="319" width="1" height="10" fill="#3a4490"/>
<rect x="168" y="321" width="1" height="1" fill="#3a4490"/>
<rect x="169" y="314" width="1" height="15" fill="#cf4a1a"/>
<rect x="170" y="326" width="1" height="1" fill="#cf4a1a"/>
<rect x="171" y="325" width="1" height="15" fill="#cf4a1a"/>
<rect x="172" y="337" width="1" height="1" fill="#cf4a1a"/>
<rect x="173" y="323" width="1" height="9" fill="#3a4490"/>
<rect x="174" y="324" width="1" height="1" fill="#3a4490"/>
<rect x="175" y="311" width="1" height="8" fill="#3a4490"/>
<rect x="176" y="312" width="1" height="1" fill="#3a4490"/>
<rect x="177" y="297" width="1" height="18" fill="#3a4490"/>
<rect x="178" y="300" width="1" height="1" fill="#3a4490"/>
<rect x="180" y="300" width="1" height="8" fill="#cf4a1a"/>
<rect x="181" y="306" width="1" height="1" fill="#cf4a1a"/>
<rect x="182" y="298" width="1" height="13" fill="#3a4490"/>
<rect x="183" y="300" width="1" height="1" fill="#3a4490"/>
<rect x="184" y="295" width="1" height="7" fill="#3a4490"/>
<rect x="185" y="296" width="1" height="1" fill="#3a4490"/>
<rect x="186" y="268" width="1" height="29" fill="#3a4490"/>
<rect x="187" y="272" width="1" height="1" fill="#3a4490"/>
<rect x="188" y="246" width="1" height="27" fill="#3a4490"/>
<rect x="189" y="250" width="1" height="1" fill="#3a4490"/>
<rect x="190" y="238" width="1" height="25" fill="#cf4a1a"/>
<rect x="191" y="258" width="1" height="1" fill="#cf4a1a"/>
<rect x="192" y="254" width="1" height="11" fill="#cf4a1a"/>
<rect x="193" y="262" width="1" height="1" fill="#cf4a1a"/>
<rect x="195" y="263" width="1" height="17" fill="#cf4a1a"/>
<rect x="196" y="276" width="1" height="1" fill="#cf4a1a"/>
<rect x="197" y="261" width="1" height="19" fill="#3a4490"/>
<rect x="198" y="264" width="1" height="1" fill="#3a4490"/>
<rect x="199" y="262" width="1" height="11" fill="#3a4490"/>
<rect x="200" y="264" width="1" height="1" fill="#3a4490"/>
<rect x="201" y="275" width="1" height="15" fill="#cf4a1a"/>
<rect x="202" y="287" width="1" height="1" fill="#cf4a1a"/>
<rect x="203" y="270" width="1" height="12" fill="#3a4490"/>
<rect x="204" y="272" width="1" height="1" fill="#3a4490"/>
<rect x="206" y="251" width="1" height="19" fill="#3a4490"/>
<rect x="207" y="254" width="1" height="1" fill="#3a4490"/>
<rect x="208" y="242" width="1" height="19" fill="#cf4a1a"/>
<rect x="209" y="257" width="1" height="1" fill="#cf4a1a"/>
<rect x="210" y="249" width="1" height="12" fill="#cf4a1a"/>
<rect x="211" y="258" width="1" height="1" fill="#cf4a1a"/>
<rect x="212" y="254" width="1" height="12" fill="#cf4a1a"/>
<rect x="213" y="263" width="1" height="1" fill="#cf4a1a"/>
<rect x="214" y="252" width="1" height="18" fill="#3a4490"/>
<rect x="215" y="255" width="1" height="1" fill="#3a4490"/>
<rect x="216" y="249" width="1" height="9" fill="#3a4490"/>
<rect x="217" y="250" width="1" height="1" fill="#3a4490"/>
<rect x="219" y="251" width="1" height="10" fill="#cf4a1a"/>
<rect x="220" y="258" width="1" height="1" fill="#cf4a1a"/>
<rect x="221" y="245" width="1" height="5" fill="#3a4490"/>
<rect x="222" y="246" width="1" height="1" fill="#3a4490"/>
<rect x="223" y="222" width="1" height="23" fill="#3a4490"/>
<rect x="224" y="225" width="1" height="1" fill="#3a4490"/>
<rect x="225" y="230" width="1" height="11" fill="#cf4a1a"/>
<rect x="226" y="238" width="1" height="1" fill="#cf4a1a"/>
<rect x="227" y="228" width="1" height="8" fill="#3a4490"/>
<rect x="228" y="229" width="1" height="1" fill="#3a4490"/>
<rect x="229" y="227" width="1" height="7" fill="#3a4490"/>
<rect x="230" y="228" width="1" height="1" fill="#3a4490"/>
<rect x="231" y="232" width="1" height="8" fill="#cf4a1a"/>
<rect x="232" y="238" width="1" height="1" fill="#cf4a1a"/>
<rect x="233" y="230" width="1" height="5" fill="#3a4490"/>
<rect x="234" y="231" width="1" height="1" fill="#3a4490"/>
<rect x="236" y="231" width="1" height="3" fill="#cf4a1a"/>
<rect x="237" y="233" width="1" height="1" fill="#cf4a1a"/>
<rect x="238" y="230" width="1" height="13" fill="#cf4a1a"/>
<rect x="239" y="240" width="1" height="1" fill="#cf4a1a"/>
<rect x="240" y="231" width="1" height="5" fill="#cf4a1a"/>
<rect x="241" y="234" width="1" height="1" fill="#cf4a1a"/>
<rect x="242" y="231" width="1" height="5" fill="#cf4a1a"/>
<rect x="243" y="234" width="1" height="1" fill="#cf4a1a"/>
<rect x="244" y="235" width="1" height="8" fill="#cf4a1a"/>
<rect x="245" y="241" width="1" height="1" fill="#cf4a1a"/>
<rect x="246" y="236" width="1" height="3" fill="#cf4a1a"/>
<rect x="247" y="238" width="1" height="1" fill="#cf4a1a"/>
<rect x="249" y="232" width="1" height="18" fill="#cf4a1a"/>
<rect x="250" y="246" width="1" height="1" fill="#cf4a1a"/>
<rect x="251" y="238" width="1" height="8" fill="#3a4490"/>
<rect x="252" y="239" width="1" height="1" fill="#3a4490"/>
<rect x="253" y="234" width="1" height="9" fill="#3a4490"/>
<rect x="254" y="235" width="1" height="1" fill="#3a4490"/>
<rect x="255" y="232" width="1" height="6" fill="#3a4490"/>
<rect x="256" y="233" width="1" height="1" fill="#3a4490"/>
<rect x="257" y="214" width="1" height="17" fill="#3a4490"/>
<rect x="258" y="217" width="1" height="1" fill="#3a4490"/>
<rect x="259" y="218" width="1" height="8" fill="#3a4490"/>
<rect x="260" y="219" width="1" height="1" fill="#3a4490"/>
<rect x="262" y="218" width="1" height="9" fill="#cf4a1a"/>
<rect x="263" y="225" width="1" height="1" fill="#cf4a1a"/>
<rect x="264" y="224" width="1" height="11" fill="#cf4a1a"/>
<rect x="265" y="232" width="1" height="1" fill="#cf4a1a"/>
<rect x="266" y="218" width="1" height="14" fill="#3a4490"/>
<rect x="267" y="220" width="1" height="1" fill="#3a4490"/>
<rect x="268" y="213" width="1" height="8" fill="#3a4490"/>
<rect x="269" y="214" width="1" height="1" fill="#3a4490"/>
<rect x="270" y="211" width="1" height="14" fill="#cf4a1a"/>
<rect x="271" y="222" width="1" height="1" fill="#cf4a1a"/>
<rect x="272" y="223" width="1" height="9" fill="#cf4a1a"/>
<rect x="273" y="230" width="1" height="1" fill="#cf4a1a"/>
<rect x="275" y="229" width="1" height="5" fill="#cf4a1a"/>
<rect x="276" y="232" width="1" height="1" fill="#cf4a1a"/>
<rect x="277" y="230" width="1" height="6" fill="#cf4a1a"/>
<rect x="278" y="234" width="1" height="1" fill="#cf4a1a"/>
<rect x="279" y="227" width="1" height="12" fill="#3a4490"/>
<rect x="280" y="229" width="1" height="1" fill="#3a4490"/>
<rect x="281" y="223" width="1" height="11" fill="#3a4490"/>
<rect x="282" y="225" width="1" height="1" fill="#3a4490"/>
<rect x="283" y="225" width="1" height="8" fill="#cf4a1a"/>
<rect x="284" y="231" width="1" height="1" fill="#cf4a1a"/>
<rect x="285" y="225" width="1" height="8" fill="#cf4a1a"/>
<rect x="286" y="231" width="1" height="1" fill="#cf4a1a"/>
<rect x="287" y="230" width="1" height="9" fill="#3a4490"/>
<rect x="288" y="231" width="1" height="1" fill="#3a4490"/>
<rect x="290" y="231" width="1" height="5" fill="#cf4a1a"/>
<rect x="291" y="234" width="1" height="1" fill="#cf4a1a"/>
<rect x="292" y="228" width="1" height="8" fill="#3a4490"/>
<rect x="293" y="229" width="1" height="1" fill="#3a4490"/>
<rect x="294" y="224" width="1" height="11" fill="#3a4490"/>
<rect x="295" y="226" width="1" height="1" fill="#3a4490"/>
<rect x="296" y="197" width="1" height="26" fill="#3a4490"/>
<rect x="297" y="201" width="1" height="1" fill="#3a4490"/>
<rect x="298" y="154" width="1" height="24" fill="#3a4490"/>
<rect x="299" y="158" width="1" height="1" fill="#3a4490"/>
<rect x="300" y="173" width="1" height="20" fill="#cf4a1a"/>
<rect x="301" y="189" width="1" height="1" fill="#cf4a1a"/>
<rect x="302" y="175" width="1" height="15" fill="#cf4a1a"/>
<rect x="303" y="187" width="1" height="1" fill="#cf4a1a"/>
<rect x="305" y="171" width="1" height="13" fill="#3a4490"/>
<rect x="306" y="173" width="1" height="1" fill="#3a4490"/>
<rect x="307" y="163" width="1" height="18" fill="#cf4a1a"/>
<rect x="308" y="177" width="1" height="1" fill="#cf4a1a"/>
<rect x="309" y="163" width="1" height="16" fill="#cf4a1a"/>
<rect x="310" y="176" width="1" height="1" fill="#cf4a1a"/>
<rect x="311" y="164" width="1" height="18" fill="#cf4a1a"/>
<rect x="312" y="178" width="1" height="1" fill="#cf4a1a"/>
<rect x="313" y="170" width="1" height="11" fill="#3a4490"/>
<rect x="314" y="172" width="1" height="1" fill="#3a4490"/>
<rect x="316" y="170" width="1" height="8" fill="#cf4a1a"/>
<rect x="317" y="176" width="1" height="1" fill="#cf4a1a"/>
<rect x="318" y="167" width="1" height="9" fill="#3a4490"/>
<rect x="319" y="168" width="1" height="1" fill="#3a4490"/>
<rect x="320" y="167" width="1" height="17" fill="#cf4a1a"/>
<rect x="321" y="180" width="1" height="1" fill="#cf4a1a"/>
<rect x="322" y="173" width="1" height="9" fill="#3a4490"/>
<rect x="323" y="174" width="1" height="1" fill="#3a4490"/>
<rect x="324" y="170" width="1" height="14" fill="#cf4a1a"/>
<rect x="325" y="181" width="1" height="1" fill="#cf4a1a"/>
<rect x="326" y="173" width="1" height="15" fill="#3a4490"/>
<rect x="327" y="175" width="1" height="1" fill="#3a4490"/>
<rect x="328" y="172" width="1" height="8" fill="#cf4a1a"/>
<rect x="329" y="178" width="1" height="1" fill="#cf4a1a"/>
<rect x="331" y="173" width="1" height="12" fill="#cf4a1a"/>
<rect x="332" y="182" width="1" height="1" fill="#cf4a1a"/>
<rect x="333" y="177" width="1" height="13" fill="#cf4a1a"/>
<rect x="334" y="187" width="1" height="1" fill="#cf4a1a"/>
<rect x="335" y="177" width="1" height="20" fill="#cf4a1a"/>
<rect x="336" y="193" width="1" height="1" fill="#cf4a1a"/>
<rect x="337" y="192" width="1" height="10" fill="#cf4a1a"/>
<rect x="338" y="199" width="1" height="1" fill="#cf4a1a"/>
<rect x="339" y="189" width="1" height="12" fill="#cf4a1a"/>
<rect x="340" y="198" width="1" height="1" fill="#cf4a1a"/>
<rect x="341" y="199" width="1" height="18" fill="#cf4a1a"/>
<rect x="342" y="213" width="1" height="1" fill="#cf4a1a"/>
<rect x="344" y="209" width="1" height="20" fill="#cf4a1a"/>
<rect x="345" y="225" width="1" height="1" fill="#cf4a1a"/>
<rect x="346" y="213" width="1" height="21" fill="#3a4490"/>
<rect x="347" y="216" width="1" height="1" fill="#3a4490"/>
<rect x="348" y="206" width="1" height="8" fill="#3a4490"/>
<rect x="349" y="207" width="1" height="1" fill="#3a4490"/>
<rect x="350" y="206" width="1" height="7" fill="#3a4490"/>
<rect x="351" y="207" width="1" height="1" fill="#3a4490"/>
<rect x="352" y="206" width="1" height="6" fill="#3a4490"/>
<rect x="353" y="207" width="1" height="1" fill="#3a4490"/>
<rect x="355" y="205" width="1" height="5" fill="#3a4490"/>
<rect x="356" y="206" width="1" height="1" fill="#3a4490"/>
<rect x="357" y="201" width="1" height="7" fill="#3a4490"/>
<rect x="358" y="202" width="1" height="1" fill="#3a4490"/>
<rect x="359" y="202" width="1" height="6" fill="#cf4a1a"/>
<rect x="360" y="206" width="1" height="1" fill="#cf4a1a"/>
<rect x="361" y="209" width="1" height="9" fill="#cf4a1a"/>
<rect x="362" y="216" width="1" height="1" fill="#cf4a1a"/>
<rect x="363" y="213" width="1" height="15" fill="#cf4a1a"/>
<rect x="364" y="225" width="1" height="1" fill="#cf4a1a"/>
<rect x="365" y="221" width="1" height="11" fill="#cf4a1a"/>
<rect x="366" y="229" width="1" height="1" fill="#cf4a1a"/>
<rect x="367" y="232" width="1" height="7" fill="#cf4a1a"/>
<rect x="368" y="237" width="1" height="1" fill="#cf4a1a"/>
<rect x="369" y="229" width="1" height="14" fill="#3a4490"/>
<rect x="370" y="231" width="1" height="1" fill="#3a4490"/>
<rect x="372" y="216" width="1" height="13" fill="#3a4490"/>
<rect x="373" y="218" width="1" height="1" fill="#3a4490"/>
<rect x="374" y="207" width="1" height="9" fill="#3a4490"/>
<rect x="375" y="208" width="1" height="1" fill="#3a4490"/>
<rect x="376" y="207" width="1" height="7" fill="#3a4490"/>
<rect x="377" y="208" width="1" height="1" fill="#3a4490"/>
<rect x="379" y="209" width="1" height="9" fill="#cf4a1a"/>
<rect x="380" y="216" width="1" height="1" fill="#cf4a1a"/>
<rect x="380" y="212" width="1" height="19" fill="#cf4a1a"/>
<rect x="381" y="227" width="1" height="1" fill="#cf4a1a"/>
<rect x="383" y="218" width="1" height="13" fill="#3a4490"/>
<rect x="384" y="220" width="1" height="1" fill="#3a4490"/>
<rect x="385" y="217" width="1" height="6" fill="#cf4a1a"/>
<rect x="386" y="221" width="1" height="1" fill="#cf4a1a"/>
<rect x="387" y="217" width="1" height="16" fill="#cf4a1a"/>
<rect x="388" y="230" width="1" height="1" fill="#cf4a1a"/>
<rect x="389" y="205" width="1" height="20" fill="#3a4490"/>
<rect x="390" y="208" width="1" height="1" fill="#3a4490"/>
<rect x="391" y="206" width="1" height="8" fill="#cf4a1a"/>
<rect x="392" y="212" width="1" height="1" fill="#cf4a1a"/>
<rect x="393" y="198" width="1" height="12" fill="#3a4490"/>
<rect x="394" y="200" width="1" height="1" fill="#3a4490"/>
<rect x="395" y="200" width="1" height="6" fill="#cf4a1a"/>
<rect x="396" y="204" width="1" height="1" fill="#cf4a1a"/>
<rect x="398" y="172" width="1" height="28" fill="#3a4490"/>
<rect x="399" y="176" width="1" height="1" fill="#3a4490"/>
<rect x="400" y="188" width="1" height="8" fill="#3a4490"/>
<rect x="401" y="189" width="1" height="1" fill="#3a4490"/>
<rect x="402" y="187" width="1" height="6" fill="#cf4a1a"/>
<rect x="403" y="191" width="1" height="1" fill="#cf4a1a"/>
<rect x="404" y="187" width="1" height="6" fill="#3a4490"/>
<rect x="405" y="188" width="1" height="1" fill="#3a4490"/>
<rect x="406" y="162" width="1" height="25" fill="#3a4490"/>
<rect x="407" y="166" width="1" height="1" fill="#3a4490"/>
<rect x="408" y="156" width="1" height="20" fill="#3a4490"/>
<rect x="409" y="159" width="1" height="1" fill="#3a4490"/>
<rect x="411" y="145" width="1" height="21" fill="#3a4490"/>
<rect x="412" y="148" width="1" height="1" fill="#3a4490"/>
<rect x="413" y="133" width="1" height="22" fill="#cf4a1a"/>
<rect x="414" y="151" width="1" height="1" fill="#cf4a1a"/>
<rect x="415" y="144" width="1" height="14" fill="#cf4a1a"/>
<rect x="416" y="155" width="1" height="1" fill="#cf4a1a"/>
<rect x="417" y="139" width="1" height="12" fill="#3a4490"/>
<rect x="418" y="141" width="1" height="1" fill="#3a4490"/>
<rect x="419" y="134" width="1" height="10" fill="#3a4490"/>
<rect x="420" y="136" width="1" height="1" fill="#3a4490"/>
<rect x="422" y="142" width="1" height="10" fill="#cf4a1a"/>
<rect x="423" y="149" width="1" height="1" fill="#cf4a1a"/>
<rect x="423" y="134" width="1" height="8" fill="#3a4490"/>
<rect x="424" y="135" width="1" height="1" fill="#3a4490"/>
<rect x="426" y="106" width="1" height="36" fill="#3a4490"/>
<rect x="427" y="111" width="1" height="1" fill="#3a4490"/>
<rect x="428" y="69" width="1" height="37" fill="#3a4490"/>
<rect x="429" y="75" width="1" height="1" fill="#3a4490"/>
<rect x="430" y="54" width="1" height="38" fill="#cf4a1a"/>
<rect x="431" y="85" width="1" height="1" fill="#cf4a1a"/>
<rect x="432" y="84" width="1" height="23" fill="#cf4a1a"/>
<rect x="433" y="103" width="1" height="1" fill="#cf4a1a"/>
<rect x="434" y="88" width="1" height="17" fill="#3a4490"/>
<rect x="435" y="91" width="1" height="1" fill="#3a4490"/>
<rect x="436" y="96" width="1" height="7" fill="#cf4a1a"/>
<rect x="437" y="101" width="1" height="1" fill="#cf4a1a"/>
<rect x="439" y="100" width="1" height="29" fill="#cf4a1a"/>
<rect x="440" y="124" width="1" height="1" fill="#cf4a1a"/>
<rect x="441" y="111" width="1" height="18" fill="#cf4a1a"/>
<rect x="442" y="125" width="1" height="1" fill="#cf4a1a"/>
<rect x="443" y="97" width="1" height="20" fill="#3a4490"/>
<rect x="444" y="100" width="1" height="1" fill="#3a4490"/>
<rect x="445" y="91" width="1" height="28" fill="#cf4a1a"/>
<rect x="446" y="114" width="1" height="1" fill="#cf4a1a"/>
<rect x="447" y="99" width="1" height="15" fill="#3a4490"/>
<rect x="448" y="101" width="1" height="1" fill="#3a4490"/>
<rect x="449" y="101" width="1" height="13" fill="#3a4490"/>
<rect x="450" y="103" width="1" height="1" fill="#3a4490"/>
<rect x="452" y="102" width="1" height="18" fill="#cf4a1a"/>
<rect x="453" y="116" width="1" height="1" fill="#cf4a1a"/>
<rect x="454" y="111" width="1" height="28" fill="#3a4490"/>
<rect x="455" y="115" width="1" height="1" fill="#3a4490"/>
<rect x="456" y="110" width="1" height="10" fill="#cf4a1a"/>
<rect x="457" y="117" width="1" height="1" fill="#cf4a1a"/>
<rect x="458" y="112" width="1" height="14" fill="#cf4a1a"/>
<rect x="459" y="123" width="1" height="1" fill="#cf4a1a"/>
<rect x="460" y="120" width="1" height="12" fill="#3a4490"/>
<rect x="461" y="122" width="1" height="1" fill="#3a4490"/>
<rect x="462" y="116" width="1" height="8" fill="#cf4a1a"/>
<rect x="463" y="122" width="1" height="1" fill="#cf4a1a"/>
<rect x="464" y="117" width="1" height="11" fill="#cf4a1a"/>
<rect x="465" y="125" width="1" height="1" fill="#cf4a1a"/>
<rect x="467" y="125" width="1" height="15" fill="#cf4a1a"/>
<rect x="468" y="137" width="1" height="1" fill="#cf4a1a"/>
<rect x="469" y="137" width="1" height="10" fill="#cf4a1a"/>
<rect x="470" y="144" width="1" height="1" fill="#cf4a1a"/>
<rect x="471" y="138" width="1" height="8" fill="#3a4490"/>
<rect x="472" y="139" width="1" height="1" fill="#3a4490"/>
<rect x="474" y="138" width="1" height="11" fill="#cf4a1a"/>
<rect x="475" y="146" width="1" height="1" fill="#cf4a1a"/>
<rect x="475" y="147" width="1" height="8" fill="#cf4a1a"/>
<rect x="476" y="153" width="1" height="1" fill="#cf4a1a"/>
<rect x="477" y="153" width="1" height="10" fill="#cf4a1a"/>
<rect x="478" y="160" width="1" height="1" fill="#cf4a1a"/>
<rect x="480" y="141" width="1" height="26" fill="#3a4490"/>
<rect x="481" y="145" width="1" height="1" fill="#3a4490"/>
<rect x="482" y="135" width="1" height="7" fill="#3a4490"/>
<rect x="483" y="136" width="1" height="1" fill="#3a4490"/>
<rect x="484" y="127" width="1" height="11" fill="#3a4490"/>
<rect x="485" y="129" width="1" height="1" fill="#3a4490"/>
<rect x="486" y="136" width="1" height="19" fill="#cf4a1a"/>
<rect x="487" y="151" width="1" height="1" fill="#cf4a1a"/>
<rect x="488" y="143" width="1" height="8" fill="#3a4490"/>
<rect x="489" y="144" width="1" height="1" fill="#3a4490"/>
<rect x="491" y="140" width="1" height="10" fill="#cf4a1a"/>
<rect x="492" y="147" width="1" height="1" fill="#cf4a1a"/>
<rect x="493" y="143" width="1" height="43" fill="#cf4a1a"/>
<rect x="494" y="179" width="1" height="1" fill="#cf4a1a"/>
<rect x="495" y="192" width="1" height="15" fill="#cf4a1a"/>
<rect x="496" y="204" width="1" height="1" fill="#cf4a1a"/>
<rect x="497" y="189" width="1" height="15" fill="#3a4490"/>
<rect x="498" y="191" width="1" height="1" fill="#3a4490"/>
<rect x="499" y="195" width="1" height="16" fill="#cf4a1a"/>
<rect x="500" y="208" width="1" height="1" fill="#cf4a1a"/>
<rect x="501" y="187" width="1" height="17" fill="#3a4490"/>
<rect x="502" y="190" width="1" height="1" fill="#3a4490"/>
<rect x="503" y="182" width="1" height="21" fill="#cf4a1a"/>
<rect x="504" y="199" width="1" height="1" fill="#cf4a1a"/>
<rect x="505" y="195" width="1" height="10" fill="#cf4a1a"/>
<rect x="506" y="202" width="1" height="1" fill="#cf4a1a"/>
<rect x="508" y="199" width="1" height="6" fill="#cf4a1a"/>
<rect x="509" y="203" width="1" height="1" fill="#cf4a1a"/>
<rect x="510" y="202" width="1" height="13" fill="#cf4a1a"/>
<rect x="511" y="212" width="1" height="1" fill="#cf4a1a"/>
<rect x="512" y="205" width="1" height="14" fill="#cf4a1a"/>
<rect x="513" y="216" width="1" height="1" fill="#cf4a1a"/>
<rect x="514" y="219" width="1" height="13" fill="#cf4a1a"/>
<rect x="515" y="229" width="1" height="1" fill="#cf4a1a"/>
<rect x="516" y="218" width="1" height="15" fill="#cf4a1a"/>
<rect x="517" y="230" width="1" height="1" fill="#cf4a1a"/>
<rect x="518" y="222" width="1" height="11" fill="#3a4490"/>
<rect x="519" y="224" width="1" height="1" fill="#3a4490"/>
<rect x="521" y="211" width="1" height="17" fill="#3a4490"/>
<rect x="522" y="214" width="1" height="1" fill="#3a4490"/>
<rect x="523" y="195" width="1" height="19" fill="#3a4490"/>
<rect x="524" y="198" width="1" height="1" fill="#3a4490"/>
<rect x="525" y="186" width="1" height="15" fill="#cf4a1a"/>
<rect x="526" y="198" width="1" height="1" fill="#cf4a1a"/>
<rect x="527" y="196" width="1" height="17" fill="#cf4a1a"/>
<rect x="528" y="209" width="1" height="1" fill="#cf4a1a"/>
<rect x="529" y="202" width="1" height="18" fill="#cf4a1a"/>
<rect x="530" y="216" width="1" height="1" fill="#cf4a1a"/>
<rect x="531" y="196" width="1" height="15" fill="#3a4490"/>
<rect x="532" y="198" width="1" height="1" fill="#3a4490"/>
<rect x="534" y="202" width="1" height="9" fill="#3a4490"/>
<rect x="535" y="203" width="1" height="1" fill="#3a4490"/>
<rect x="536" y="190" width="1" height="10" fill="#3a4490"/>
<rect x="537" y="192" width="1" height="1" fill="#3a4490"/>
<rect x="539" y="173" width="1" height="14" fill="#3a4490"/>
<rect x="540" y="175" width="1" height="1" fill="#3a4490"/>
<rect x="540" y="176" width="1" height="24" fill="#cf4a1a"/>
<rect x="541" y="195" width="1" height="1" fill="#cf4a1a"/>
<rect x="542" y="187" width="1" height="15" fill="#cf4a1a"/>
<rect x="543" y="199" width="1" height="1" fill="#cf4a1a"/>
<rect x="544" y="194" width="1" height="10" fill="#3a4490"/>
<rect x="545" y="196" width="1" height="1" fill="#3a4490"/>
<rect x="547" y="185" width="1" height="13" fill="#3a4490"/>
<rect x="548" y="187" width="1" height="1" fill="#3a4490"/>
<rect x="549" y="172" width="1" height="19" fill="#3a4490"/>
<rect x="550" y="175" width="1" height="1" fill="#3a4490"/>
<rect x="551" y="182" width="1" height="15" fill="#cf4a1a"/>
<rect x="552" y="194" width="1" height="1" fill="#cf4a1a"/>
<rect x="553" y="184" width="1" height="10" fill="#3a4490"/>
<rect x="554" y="186" width="1" height="1" fill="#3a4490"/>
<rect x="555" y="181" width="1" height="14" fill="#cf4a1a"/>
<rect x="556" y="192" width="1" height="1" fill="#cf4a1a"/>
<rect x="557" y="192" width="1" height="12" fill="#cf4a1a"/>
<rect x="558" y="201" width="1" height="1" fill="#cf4a1a"/>
<rect x="559" y="197" width="1" height="16" fill="#cf4a1a"/>
<rect x="560" y="210" width="1" height="1" fill="#cf4a1a"/>
<rect x="562" y="198" width="1" height="18" fill="#cf4a1a"/>
<rect x="563" y="212" width="1" height="1" fill="#cf4a1a"/>
<rect x="564" y="204" width="1" height="13" fill="#3a4490"/>
<rect x="565" y="206" width="1" height="1" fill="#3a4490"/>
<rect x="566" y="200" width="1" height="12" fill="#3a4490"/>
<rect x="567" y="202" width="1" height="1" fill="#3a4490"/>
<rect x="568" y="193" width="1" height="17" fill="#3a4490"/>
<rect x="569" y="196" width="1" height="1" fill="#3a4490"/>
<rect x="570" y="189" width="1" height="9" fill="#3a4490"/>
<rect x="571" y="190" width="1" height="1" fill="#3a4490"/>
<rect x="572" y="183" width="1" height="15" fill="#3a4490"/>
<rect x="573" y="185" width="1" height="1" fill="#3a4490"/>
<rect x="575" y="192" width="1" height="11" fill="#cf4a1a"/>
<rect x="576" y="200" width="1" height="1" fill="#cf4a1a"/>
<rect x="577" y="194" width="1" height="11" fill="#3a4490"/>
<rect x="578" y="196" width="1" height="1" fill="#3a4490"/>
<rect x="579" y="193" width="1" height="8" fill="#3a4490"/>
<rect x="580" y="194" width="1" height="1" fill="#3a4490"/>
<rect x="581" y="194" width="1" height="8" fill="#cf4a1a"/>
<rect x="582" y="200" width="1" height="1" fill="#cf4a1a"/>
<rect x="583" y="192" width="1" height="7" fill="#3a4490"/>
<rect x="584" y="193" width="1" height="1" fill="#3a4490"/>
<rect x="585" y="187" width="1" height="7" fill="#3a4490"/>
<rect x="586" y="188" width="1" height="1" fill="#3a4490"/>
<rect x="588" y="185" width="1" height="9" fill="#cf4a1a"/>
<rect x="589" y="192" width="1" height="1" fill="#cf4a1a"/>
<rect x="590" y="189" width="1" height="6" fill="#cf4a1a"/>
<rect x="591" y="193" width="1" height="1" fill="#cf4a1a"/>
<rect x="592" y="185" width="1" height="6" fill="#3a4490"/>
<rect x="593" y="186" width="1" height="1" fill="#3a4490"/>
<rect x="594" y="185" width="1" height="6" fill="#3a4490"/>
<rect x="595" y="186" width="1" height="1" fill="#3a4490"/>
<rect x="596" y="177" width="1" height="14" fill="#3a4490"/>
<rect x="597" y="179" width="1" height="1" fill="#3a4490"/>
<rect x="598" y="166" width="1" height="14" fill="#3a4490"/>
<rect x="599" y="168" width="1" height="1" fill="#3a4490"/>
<rect x="600" y="175" width="1" height="9" fill="#cf4a1a"/>
<rect x="601" y="182" width="1" height="1" fill="#cf4a1a"/>
<rect x="603" y="181" width="1" height="22" fill="#cf4a1a"/>
<rect x="604" y="199" width="1" height="1" fill="#cf4a1a"/>
<rect x="605" y="198" width="1" height="19" fill="#cf4a1a"/>
<rect x="606" y="213" width="1" height="1" fill="#cf4a1a"/>
<rect x="607" y="203" width="1" height="14" fill="#3a4490"/>
<rect x="608" y="205" width="1" height="1" fill="#3a4490"/>
<rect x="609" y="205" width="1" height="8" fill="#3a4490"/>
<rect x="610" y="206" width="1" height="1" fill="#3a4490"/>
<rect x="611" y="209" width="1" height="8" fill="#cf4a1a"/>
<rect x="612" y="215" width="1" height="1" fill="#cf4a1a"/>
<rect x="614" y="212" width="1" height="5" fill="#cf4a1a"/>
<rect x="615" y="215" width="1" height="1" fill="#cf4a1a"/>
<rect x="616" y="213" width="1" height="3" fill="#3a4490"/>
<rect x="617" y="213" width="1" height="1" fill="#3a4490"/>
<rect x="618" y="207" width="1" height="7" fill="#3a4490"/>
<rect x="619" y="208" width="1" height="1" fill="#3a4490"/>
<rect x="620" y="204" width="1" height="9" fill="#cf4a1a"/>
<rect x="621" y="211" width="1" height="1" fill="#cf4a1a"/>
<rect x="622" y="212" width="1" height="3" fill="#cf4a1a"/>
<rect x="623" y="214" width="1" height="1" fill="#cf4a1a"/>
<rect x="624" y="208" width="1" height="5" fill="#3a4490"/>
<rect x="625" y="209" width="1" height="1" fill="#3a4490"/>
<rect x="627" y="199" width="1" height="13" fill="#3a4490"/>
<rect x="628" y="201" width="1" height="1" fill="#3a4490"/>
<rect x="629" y="186" width="1" height="13" fill="#3a4490"/>
<rect x="630" y="188" width="1" height="1" fill="#3a4490"/>
<rect x="631" y="181" width="1" height="13" fill="#cf4a1a"/>
<rect x="632" y="191" width="1" height="1" fill="#cf4a1a"/>
<rect x="633" y="185" width="1" height="8" fill="#cf4a1a"/>
<rect x="634" y="191" width="1" height="1" fill="#cf4a1a"/>
<rect x="635" y="178" width="1" height="9" fill="#3a4490"/>
<rect x="636" y="179" width="1" height="1" fill="#3a4490"/>
<rect x="637" y="173" width="1" height="13" fill="#3a4490"/>
<rect x="638" y="175" width="1" height="1" fill="#3a4490"/>
<rect x="639" y="160" width="1" height="15" fill="#3a4490"/>
<rect x="640" y="162" width="1" height="1" fill="#3a4490"/>
<rect x="642" y="152" width="1" height="23" fill="#cf4a1a"/>
<rect x="643" y="171" width="1" height="1" fill="#cf4a1a"/>
<rect x="644" y="164" width="1" height="17" fill="#cf4a1a"/>
<rect x="645" y="177" width="1" height="1" fill="#cf4a1a"/>
<rect x="646" y="153" width="1" height="13" fill="#3a4490"/>
<rect x="647" y="155" width="1" height="1" fill="#3a4490"/>
<rect x="648" y="155" width="1" height="14" fill="#3a4490"/>
<rect x="649" y="157" width="1" height="1" fill="#3a4490"/>
<rect x="650" y="148" width="1" height="13" fill="#3a4490"/>
<rect x="651" y="150" width="1" height="1" fill="#3a4490"/>
<rect x="652" y="139" width="1" height="11" fill="#3a4490"/>
<rect x="653" y="141" width="1" height="1" fill="#3a4490"/>
<rect x="654" y="139" width="1" height="8" fill="#3a4490"/>
<rect x="655" y="140" width="1" height="1" fill="#3a4490"/>
<rect x="657" y="136" width="1" height="8" fill="#3a4490"/>
<rect x="658" y="137" width="1" height="1" fill="#3a4490"/>
<rect x="659" y="140" width="1" height="13" fill="#cf4a1a"/>
<rect x="660" y="150" width="1" height="1" fill="#cf4a1a"/>
<rect x="661" y="137" width="1" height="13" fill="#cf4a1a"/>
<rect x="662" y="147" width="1" height="1" fill="#cf4a1a"/>
<rect x="663" y="146" width="1" height="13" fill="#3a4490"/>
<rect x="664" y="148" width="1" height="1" fill="#3a4490"/>
<rect x="665" y="151" width="1" height="14" fill="#cf4a1a"/>
<rect x="666" y="162" width="1" height="1" fill="#cf4a1a"/>
<rect x="667" y="154" width="1" height="15" fill="#cf4a1a"/>
<rect x="668" y="166" width="1" height="1" fill="#cf4a1a"/>
<rect x="670" y="161" width="1" height="6" fill="#3a4490"/>
<rect x="671" y="162" width="1" height="1" fill="#3a4490"/>
<rect x="672" y="166" width="1" height="17" fill="#cf4a1a"/>
<rect x="673" y="179" width="1" height="1" fill="#cf4a1a"/>
<rect x="674" y="170" width="1" height="9" fill="#cf4a1a"/>
<rect x="675" y="177" width="1" height="1" fill="#cf4a1a"/>
<rect x="676" y="171" width="1" height="6" fill="#3a4490"/>
<rect x="677" y="172" width="1" height="1" fill="#3a4490"/>
<rect x="678" y="168" width="1" height="8" fill="#3a4490"/>
<rect x="679" y="169" width="1" height="1" fill="#3a4490"/>
<rect x="680" y="170" width="1" height="7" fill="#3a4490"/>
<rect x="681" y="171" width="1" height="1" fill="#3a4490"/>
<rect x="683" y="172" width="1" height="13" fill="#cf4a1a"/>
<rect x="684" y="182" width="1" height="1" fill="#cf4a1a"/>
<rect x="685" y="177" width="1" height="21" fill="#cf4a1a"/>
<rect x="686" y="194" width="1" height="1" fill="#cf4a1a"/>
<rect x="687" y="192" width="1" height="8" fill="#3a4490"/>
<rect x="688" y="193" width="1" height="1" fill="#3a4490"/>
<rect x="689" y="194" width="1" height="21" fill="#cf4a1a"/>
<rect x="690" y="211" width="1" height="1" fill="#cf4a1a"/>
<rect x="691" y="196" width="1" height="12" fill="#3a4490"/>
<rect x="692" y="198" width="1" height="1" fill="#3a4490"/>
<rect x="693" y="194" width="1" height="11" fill="#3a4490"/>
<rect x="694" y="196" width="1" height="1" fill="#3a4490"/>
<rect x="695" y="195" width="1" height="12" fill="#cf4a1a"/>
<rect x="696" y="204" width="1" height="1" fill="#cf4a1a"/>
<rect x="698" y="194" width="1" height="11" fill="#3a4490"/>
<rect x="699" y="196" width="1" height="1" fill="#3a4490"/>
<rect x="700" y="195" width="1" height="9" fill="#cf4a1a"/>
<rect x="701" y="202" width="1" height="1" fill="#cf4a1a"/>
<rect x="702" y="198" width="1" height="12" fill="#3a4490"/>
<rect x="703" y="200" width="1" height="1" fill="#3a4490"/>
<rect x="704" y="197" width="1" height="6" fill="#3a4490"/>
<rect x="705" y="198" width="1" height="1" fill="#3a4490"/>
<rect x="706" y="185" width="1" height="11" fill="#3a4490"/>
<rect x="707" y="187" width="1" height="1" fill="#3a4490"/>
<rect x="708" y="181" width="1" height="6" fill="#3a4490"/>
<rect x="709" y="182" width="1" height="1" fill="#3a4490"/>
<rect x="711" y="177" width="1" height="11" fill="#3a4490"/>
<rect x="712" y="179" width="1" height="1" fill="#3a4490"/>
<rect x="713" y="172" width="1" height="9" fill="#3a4490"/>
<rect x="714" y="173" width="1" height="1" fill="#3a4490"/>
<rect x="715" y="173" width="1" height="6" fill="#3a4490"/>
<rect x="716" y="174" width="1" height="1" fill="#3a4490"/>
<rect x="717" y="171" width="1" height="7" fill="#cf4a1a"/>
<rect x="718" y="176" width="1" height="1" fill="#cf4a1a"/>
<rect x="719" y="177" width="1" height="16" fill="#cf4a1a"/>
<rect x="720" y="190" width="1" height="1" fill="#cf4a1a"/>
<rect x="721" y="189" width="1" height="19" fill="#cf4a1a"/>
<rect x="722" y="204" width="1" height="1" fill="#cf4a1a"/>
<rect x="724" y="195" width="1" height="22" fill="#cf4a1a"/>
<rect x="725" y="213" width="1" height="1" fill="#cf4a1a"/>
<rect x="726" y="209" width="1" height="27" fill="#cf4a1a"/>
<rect x="727" y="231" width="1" height="1" fill="#cf4a1a"/>
<rect x="728" y="231" width="1" height="24" fill="#cf4a1a"/>
<rect x="729" y="250" width="1" height="1" fill="#cf4a1a"/>
<rect x="730" y="247" width="1" height="16" fill="#cf4a1a"/>
<rect x="731" y="260" width="1" height="1" fill="#cf4a1a"/>
<rect x="732" y="251" width="1" height="13" fill="#cf4a1a"/>
<rect x="733" y="261" width="1" height="1" fill="#cf4a1a"/>
<rect x="734" y="258" width="1" height="11" fill="#cf4a1a"/>
<rect x="735" y="266" width="1" height="1" fill="#cf4a1a"/>
<rect x="736" y="258" width="1" height="9" fill="#3a4490"/>
<rect x="737" y="259" width="1" height="1" fill="#3a4490"/>
<rect x="739" y="258" width="1" height="11" fill="#3a4490"/>
<rect x="740" y="260" width="1" height="1" fill="#3a4490"/>
<rect x="741" y="256" width="1" height="11" fill="#3a4490"/>
<rect x="742" y="258" width="1" height="1" fill="#3a4490"/>
<rect x="743" y="258" width="1" height="8" fill="#cf4a1a"/>
<rect x="744" y="264" width="1" height="1" fill="#cf4a1a"/>
<rect x="745" y="259" width="1" height="9" fill="#cf4a1a"/>
<rect x="746" y="266" width="1" height="1" fill="#cf4a1a"/>
<rect x="747" y="263" width="1" height="4" fill="#cf4a1a"/>
<rect x="748" y="265" width="1" height="1" fill="#cf4a1a"/>
<rect x="749" y="262" width="1" height="5" fill="#cf4a1a"/>
<rect x="750" y="265" width="1" height="1" fill="#cf4a1a"/>
<rect x="752" y="261" width="1" height="8" fill="#3a4490"/>
<rect x="753" y="262" width="1" height="1" fill="#3a4490"/>
<rect x="754" y="256" width="1" height="10" fill="#3a4490"/>
<rect x="755" y="258" width="1" height="1" fill="#3a4490"/>
<rect x="756" y="246" width="1" height="10" fill="#3a4490"/>
<rect x="757" y="248" width="1" height="1" fill="#3a4490"/>
<rect x="758" y="239" width="1" height="8" fill="#3a4490"/>
<rect x="759" y="240" width="1" height="1" fill="#3a4490"/>
<rect x="760" y="226" width="1" height="16" fill="#3a4490"/>
<rect x="761" y="228" width="1" height="1" fill="#3a4490"/>
<rect x="762" y="222" width="1" height="26" fill="#cf4a1a"/>
<rect x="763" y="243" width="1" height="1" fill="#cf4a1a"/>
<rect x="765" y="233" width="1" height="7" fill="#3a4490"/>
<rect x="766" y="234" width="1" height="1" fill="#3a4490"/>
<rect x="767" y="235" width="1" height="9" fill="#cf4a1a"/>
<rect x="768" y="242" width="1" height="1" fill="#cf4a1a"/>
<rect x="769" y="233" width="1" height="7" fill="#3a4490"/>
<rect x="770" y="234" width="1" height="1" fill="#3a4490"/>
<rect x="771" y="233" width="1" height="4" fill="#cf4a1a"/>
<rect x="772" y="235" width="1" height="1" fill="#cf4a1a"/>
<rect x="773" y="225" width="1" height="9" fill="#3a4490"/>
<rect x="774" y="226" width="1" height="1" fill="#3a4490"/>
<rect x="775" y="223" width="1" height="10" fill="#3a4490"/>
<rect x="776" y="225" width="1" height="1" fill="#3a4490"/>
<rect x="778" y="219" width="1" height="7" fill="#3a4490"/>
<rect x="779" y="220" width="1" height="1" fill="#3a4490"/>
<rect x="780" y="215" width="1" height="11" fill="#3a4490"/>
<rect x="781" y="217" width="1" height="1" fill="#3a4490"/>
<rect x="782" y="219" width="1" height="11" fill="#cf4a1a"/>
<rect x="783" y="227" width="1" height="1" fill="#cf4a1a"/>
<rect x="784" y="226" width="1" height="11" fill="#cf4a1a"/>
<rect x="785" y="234" width="1" height="1" fill="#cf4a1a"/>
<rect x="786" y="221" width="1" height="7" fill="#3a4490"/>
<rect x="787" y="222" width="1" height="1" fill="#3a4490"/>
<rect x="788" y="223" width="1" height="11" fill="#cf4a1a"/>
<rect x="789" y="231" width="1" height="1" fill="#cf4a1a"/>
<rect x="790" y="227" width="1" height="10" fill="#3a4490"/>
<rect x="791" y="229" width="1" height="1" fill="#3a4490"/>
<rect x="793" y="233" width="1" height="10" fill="#cf4a1a"/>
<rect x="794" y="240" width="1" height="1" fill="#cf4a1a"/>
<rect x="795" y="230" width="1" height="10" fill="#3a4490"/>
<rect x="796" y="232" width="1" height="1" fill="#3a4490"/>
<rect x="797" y="219" width="1" height="15" fill="#3a4490"/>
<rect x="798" y="221" width="1" height="1" fill="#3a4490"/>
<rect x="799" y="212" width="1" height="11" fill="#cf4a1a"/>
<rect x="800" y="220" width="1" height="1" fill="#cf4a1a"/>
<rect x="801" y="214" width="1" height="14" fill="#cf4a1a"/>
<rect x="802" y="225" width="1" height="1" fill="#cf4a1a"/>
<rect x="803" y="223" width="1" height="7" fill="#cf4a1a"/>
<rect x="804" y="228" width="1" height="1" fill="#cf4a1a"/>
<rect x="806" y="221" width="1" height="9" fill="#3a4490"/>
<rect x="807" y="222" width="1" height="1" fill="#3a4490"/>
<rect x="808" y="218" width="1" height="6" fill="#cf4a1a"/>
<rect x="809" y="222" width="1" height="1" fill="#cf4a1a"/>
<rect x="810" y="221" width="1" height="9" fill="#cf4a1a"/>
<rect x="811" y="228" width="1" height="1" fill="#cf4a1a"/>
<rect x="812" y="222" width="1" height="5" fill="#3a4490"/>
<rect x="813" y="223" width="1" height="1" fill="#3a4490"/>
<rect x="814" y="212" width="1" height="11" fill="#3a4490"/>
<rect x="815" y="214" width="1" height="1" fill="#3a4490"/>
<rect x="816" y="213" width="1" height="10" fill="#cf4a1a"/>
<rect x="817" y="220" width="1" height="1" fill="#cf4a1a"/>
<rect x="819" y="214" width="1" height="13" fill="#cf4a1a"/>
<rect x="820" y="224" width="1" height="1" fill="#cf4a1a"/>
<rect x="821" y="221" width="1" height="5" fill="#3a4490"/>
<rect x="822" y="222" width="1" height="1" fill="#3a4490"/>
<rect x="823" y="218" width="1" height="9" fill="#cf4a1a"/>
<rect x="824" y="225" width="1" height="1" fill="#cf4a1a"/>
<rect x="825" y="222" width="1" height="8" fill="#cf4a1a"/>
<rect x="826" y="228" width="1" height="1" fill="#cf4a1a"/>
<rect x="827" y="223" width="1" height="11" fill="#cf4a1a"/>
<rect x="828" y="231" width="1" height="1" fill="#cf4a1a"/>
<rect x="829" y="221" width="1" height="11" fill="#cf4a1a"/>
<rect x="830" y="229" width="1" height="1" fill="#cf4a1a"/>
<rect x="831" y="234" width="1" height="12" fill="#cf4a1a"/>
<rect x="832" y="243" width="1" height="1" fill="#cf4a1a"/>
<rect x="834" y="238" width="1" height="13" fill="#cf4a1a"/>
<rect x="835" y="248" width="1" height="1" fill="#cf4a1a"/>
<rect x="836" y="241" width="1" height="13" fill="#cf4a1a"/>
<rect x="837" y="251" width="1" height="1" fill="#cf4a1a"/>
<rect x="838" y="234" width="1" height="20" fill="#cf4a1a"/>
<rect x="839" y="250" width="1" height="1" fill="#cf4a1a"/>
<rect x="840" y="254" width="1" height="29" fill="#cf4a1a"/>
<rect x="841" y="278" width="1" height="1" fill="#cf4a1a"/>
<rect x="842" y="250" width="1" height="19" fill="#3a4490"/>
<rect x="843" y="253" width="1" height="1" fill="#3a4490"/>
<rect x="844" y="218" width="1" height="26" fill="#3a4490"/>
<rect x="845" y="222" width="1" height="1" fill="#3a4490"/>
<rect x="847" y="212" width="1" height="17" fill="#3a4490"/>
<rect x="848" y="215" width="1" height="1" fill="#3a4490"/>
<rect x="849" y="212" width="1" height="8" fill="#3a4490"/>
<rect x="850" y="213" width="1" height="1" fill="#3a4490"/>
<rect x="851" y="209" width="1" height="9" fill="#3a4490"/>
<rect x="852" y="210" width="1" height="1" fill="#3a4490"/>
<rect x="853" y="212" width="1" height="6" fill="#cf4a1a"/>
<rect x="854" y="216" width="1" height="1" fill="#cf4a1a"/>
<rect x="855" y="215" width="1" height="12" fill="#cf4a1a"/>
<rect x="856" y="224" width="1" height="1" fill="#cf4a1a"/>
<rect x="857" y="217" width="1" height="6" fill="#3a4490"/>
<rect x="858" y="218" width="1" height="1" fill="#3a4490"/>
<rect x="860" y="219" width="1" height="11" fill="#cf4a1a"/>
<rect x="861" y="227" width="1" height="1" fill="#cf4a1a"/>
<rect x="862" y="225" width="1" height="12" fill="#3a4490"/>
<rect x="863" y="227" width="1" height="1" fill="#3a4490"/>
<rect x="864" y="222" width="1" height="8" fill="#cf4a1a"/>
<rect x="865" y="228" width="1" height="1" fill="#cf4a1a"/>
<rect x="866" y="217" width="1" height="13" fill="#3a4490"/>
<rect x="867" y="219" width="1" height="1" fill="#3a4490"/>
<rect x="868" y="210" width="1" height="24" fill="#cf4a1a"/>
<rect x="869" y="229" width="1" height="1" fill="#cf4a1a"/>
<rect x="870" y="230" width="1" height="16" fill="#cf4a1a"/>
<rect x="871" y="243" width="1" height="1" fill="#cf4a1a"/>
<rect x="872" y="230" width="1" height="14" fill="#3a4490"/>
<rect x="873" y="232" width="1" height="1" fill="#3a4490"/>
<rect x="875" y="235" width="1" height="10" fill="#3a4490"/>
<rect x="876" y="237" width="1" height="1" fill="#3a4490"/>
<rect x="877" y="232" width="1" height="9" fill="#3a4490"/>
<rect x="878" y="233" width="1" height="1" fill="#3a4490"/>
<rect x="879" y="228" width="1" height="8" fill="#cf4a1a"/>
<rect x="880" y="234" width="1" height="1" fill="#cf4a1a"/>
<rect x="881" y="236" width="1" height="8" fill="#cf4a1a"/>
<rect x="882" y="242" width="1" height="1" fill="#cf4a1a"/>
<rect x="883" y="240" width="1" height="18" fill="#cf4a1a"/>
<rect x="884" y="254" width="1" height="1" fill="#cf4a1a"/>
<rect x="885" y="224" width="1" height="37" fill="#3a4490"/>
<rect x="886" y="230" width="1" height="1" fill="#3a4490"/>
<rect x="888" y="200" width="1" height="34" fill="#3a4490"/>
<rect x="889" y="205" width="1" height="1" fill="#3a4490"/>
<rect x="890" y="197" width="1" height="18" fill="#cf4a1a"/>
<rect x="891" y="211" width="1" height="1" fill="#cf4a1a"/>
<rect x="892" y="210" width="1" height="16" fill="#cf4a1a"/>
<rect x="893" y="223" width="1" height="1" fill="#cf4a1a"/>
<rect x="894" y="212" width="1" height="18" fill="#cf4a1a"/>
<rect x="895" y="226" width="1" height="1" fill="#cf4a1a"/>
<rect x="896" y="206" width="1" height="26" fill="#3a4490"/>
<rect x="897" y="210" width="1" height="1" fill="#3a4490"/>
<rect x="898" y="216" width="1" height="13" fill="#cf4a1a"/>
<rect x="899" y="226" width="1" height="1" fill="#cf4a1a"/>
<rect x="901" y="217" width="1" height="11" fill="#cf4a1a"/>
<rect x="902" y="225" width="1" height="1" fill="#cf4a1a"/>
<rect x="903" y="207" width="1" height="19" fill="#3a4490"/>
<rect x="904" y="210" width="1" height="1" fill="#3a4490"/>
<rect x="905" y="190" width="1" height="16" fill="#3a4490"/>
<rect x="906" y="192" width="1" height="1" fill="#3a4490"/>
<rect x="907" y="200" width="1" height="17" fill="#cf4a1a"/>
<rect x="908" y="213" width="1" height="1" fill="#cf4a1a"/>
<rect x="909" y="185" width="1" height="41" fill="#cf4a1a"/>
<rect x="910" y="219" width="1" height="1" fill="#cf4a1a"/>
<rect x="911" y="204" width="1" height="22" fill="#3a4490"/>
<rect x="912" y="207" width="1" height="1" fill="#3a4490"/>
<rect x="914" y="196" width="1" height="15" fill="#3a4490"/>
<rect x="915" y="198" width="1" height="1" fill="#3a4490"/>
<rect x="916" y="172" width="1" height="28" fill="#3a4490"/>
<rect x="917" y="176" width="1" height="1" fill="#3a4490"/>
<rect x="918" y="162" width="1" height="24" fill="#3a4490"/>
<rect x="919" y="166" width="1" height="1" fill="#3a4490"/>
<rect x="920" y="139" width="1" height="28" fill="#3a4490"/>
<rect x="921" y="143" width="1" height="1" fill="#3a4490"/>
<rect x="922" y="156" width="1" height="34" fill="#cf4a1a"/>
<rect x="923" y="184" width="1" height="1" fill="#cf4a1a"/>
<rect x="924" y="188" width="1" height="19" fill="#cf4a1a"/>
<rect x="925" y="203" width="1" height="1" fill="#cf4a1a"/>
<rect x="926" y="199" width="1" height="36" fill="#cf4a1a"/>
<rect x="927" y="229" width="1" height="1" fill="#cf4a1a"/>
<rect x="929" y="199" width="1" height="27" fill="#cf4a1a"/>
<rect x="930" y="221" width="1" height="1" fill="#cf4a1a"/>
<rect x="931" y="200" width="1" height="17" fill="#3a4490"/>
<rect x="932" y="203" width="1" height="1" fill="#3a4490"/>
<rect x="933" y="198" width="1" height="19" fill="#3a4490"/>
<rect x="934" y="201" width="1" height="1" fill="#3a4490"/>
<rect x="935" y="196" width="1" height="12" fill="#cf4a1a"/>
<rect x="936" y="205" width="1" height="1" fill="#cf4a1a"/>
<rect x="937" y="182" width="1" height="16" fill="#3a4490"/>
<rect x="938" y="184" width="1" height="1" fill="#3a4490"/>
<rect x="939" y="178" width="1" height="21" fill="#cf4a1a"/>
<rect x="940" y="195" width="1" height="1" fill="#cf4a1a"/>
<rect x="942" y="182" width="1" height="9" fill="#3a4490"/>
<rect x="943" y="183" width="1" height="1" fill="#3a4490"/>
<rect x="944" y="180" width="1" height="10" fill="#3a4490"/>
<rect x="945" y="182" width="1" height="1" fill="#3a4490"/>
<rect x="946" y="183" width="1" height="7" fill="#cf4a1a"/>
<rect x="947" y="188" width="1" height="1" fill="#cf4a1a"/>
<rect x="948" y="176" width="1" height="17" fill="#cf4a1a"/>
<rect x="949" y="189" width="1" height="1" fill="#cf4a1a"/>
<rect x="950" y="188" width="1" height="11" fill="#cf4a1a"/>
<rect x="951" y="196" width="1" height="1" fill="#cf4a1a"/>
<rect x="952" y="190" width="1" height="6" fill="#cf4a1a"/>
<rect x="953" y="194" width="1" height="1" fill="#cf4a1a"/>
<rect x="955" y="185" width="1" height="14" fill="#3a4490"/>
<rect x="956" y="187" width="1" height="1" fill="#3a4490"/>
<rect x="957" y="183" width="1" height="19" fill="#cf4a1a"/>
<rect x="958" y="198" width="1" height="1" fill="#cf4a1a"/>
<rect x="959" y="202" width="1" height="14" fill="#cf4a1a"/>
<rect x="960" y="213" width="1" height="1" fill="#cf4a1a"/>
<rect x="961" y="209" width="1" height="11" fill="#cf4a1a"/>
<rect x="962" y="217" width="1" height="1" fill="#cf4a1a"/>
<rect x="963" y="210" width="1" height="15" fill="#3a4490"/>
<rect x="964" y="212" width="1" height="1" fill="#3a4490"/>
<rect x="965" y="213" width="1" height="15" fill="#cf4a1a"/>
<rect x="966" y="225" width="1" height="1" fill="#cf4a1a"/>
<rect x="967" y="208" width="1" height="12" fill="#3a4490"/>
<rect x="968" y="210" width="1" height="1" fill="#3a4490"/>
<rect x="970" y="203" width="1" height="11" fill="#3a4490"/>
<rect x="971" y="205" width="1" height="1" fill="#3a4490"/>
<rect x="972" y="199" width="1" height="12" fill="#3a4490"/>
<rect x="973" y="201" width="1" height="1" fill="#3a4490"/>
<rect x="974" y="195" width="1" height="7" fill="#3a4490"/>
<rect x="975" y="196" width="1" height="1" fill="#3a4490"/>
<rect x="976" y="194" width="1" height="6" fill="#cf4a1a"/>
<rect x="977" y="198" width="1" height="1" fill="#cf4a1a"/>
<rect x="978" y="192" width="1" height="8" fill="#cf4a1a"/>
<rect x="979" y="198" width="1" height="1" fill="#cf4a1a"/>
<rect x="980" y="198" width="1" height="13" fill="#cf4a1a"/>
<rect x="981" y="208" width="1" height="1" fill="#cf4a1a"/>
<rect x="983" y="204" width="1" height="8" fill="#3a4490"/>
<rect x="984" y="205" width="1" height="1" fill="#3a4490"/>
<rect x="985" y="194" width="1" height="12" fill="#3a4490"/>
<rect x="986" y="196" width="1" height="1" fill="#3a4490"/>
<rect x="987" y="188" width="1" height="19" fill="#cf4a1a"/>
<rect x="988" y="203" width="1" height="1" fill="#cf4a1a"/>
<rect x="989" y="194" width="1" height="18" fill="#3a4490"/>
<rect x="990" y="197" width="1" height="1" fill="#3a4490"/>
<rect x="991" y="194" width="1" height="14" fill="#cf4a1a"/>
<rect x="992" y="205" width="1" height="1" fill="#cf4a1a"/>
<rect x="993" y="205" width="1" height="7" fill="#cf4a1a"/>
<rect x="994" y="210" width="1" height="1" fill="#cf4a1a"/>
<rect x="996" y="208" width="1" height="9" fill="#cf4a1a"/>
<rect x="997" y="215" width="1" height="1" fill="#cf4a1a"/>
<rect x="998" y="211" width="1" height="10" fill="#cf4a1a"/>
<rect x="999" y="218" width="1" height="1" fill="#cf4a1a"/>
<rect x="1000" y="218" width="1" height="10" fill="#cf4a1a"/>
<rect x="1001" y="225" width="1" height="1" fill="#cf4a1a"/>
<rect x="1002" y="218" width="1" height="8" fill="#3a4490"/>
<rect x="1003" y="219" width="1" height="1" fill="#3a4490"/>
<rect x="1004" y="219" width="1" height="8" fill="#cf4a1a"/>
<rect x="1005" y="225" width="1" height="1" fill="#cf4a1a"/>
<rect x="1006" y="219" width="1" height="12" fill="#3a4490"/>
<rect x="1007" y="221" width="1" height="1" fill="#3a4490"/>
<rect x="1008" y="218" width="1" height="7" fill="#cf4a1a"/>
<rect x="1009" y="223" width="1" height="1" fill="#cf4a1a"/>
<rect x="1011" y="224" width="1" height="6" fill="#cf4a1a"/>
<rect x="1012" y="228" width="1" height="1" fill="#cf4a1a"/>
<rect x="1013" y="220" width="1" height="8" fill="#3a4490"/>
<rect x="1014" y="221" width="1" height="1" fill="#3a4490"/>
<rect x="1015" y="226" width="1" height="5" fill="#cf4a1a"/>
<rect x="1016" y="229" width="1" height="1" fill="#cf4a1a"/>
<rect x="1017" y="225" width="1" height="7" fill="#3a4490"/>
<rect x="1018" y="226" width="1" height="1" fill="#3a4490"/>
<rect x="1019" y="222" width="1" height="5" fill="#3a4490"/>
<rect x="1020" y="223" width="1" height="1" fill="#3a4490"/>
<rect x="1021" y="214" width="1" height="10" fill="#3a4490"/>
<rect x="1022" y="216" width="1" height="1" fill="#3a4490"/>
<rect x="1024" y="218" width="1" height="8" fill="#cf4a1a"/>
<rect x="1025" y="224" width="1" height="1" fill="#cf4a1a"/>
<rect x="1026" y="217" width="1" height="5" fill="#3a4490"/>
<rect x="1027" y="218" width="1" height="1" fill="#3a4490"/>
<rect x="1028" y="217" width="1" height="8" fill="#cf4a1a"/>
<rect x="1029" y="223" width="1" height="1" fill="#cf4a1a"/>
<rect x="1030" y="214" width="1" height="7" fill="#3a4490"/>
<rect x="1031" y="215" width="1" height="1" fill="#3a4490"/>
<rect x="1032" y="213" width="1" height="5" fill="#cf4a1a"/>
<rect x="1033" y="216" width="1" height="1" fill="#cf4a1a"/>
<rect x="1034" y="213" width="1" height="5" fill="#cf4a1a"/>
<rect x="1035" y="216" width="1" height="1" fill="#cf4a1a"/>
<rect x="1037" y="217" width="1" height="4" fill="#cf4a1a"/>
<rect x="1038" y="219" width="1" height="1" fill="#cf4a1a"/>
<rect x="1039" y="221" width="1" height="7" fill="#cf4a1a"/>
<rect x="1040" y="226" width="1" height="1" fill="#cf4a1a"/>
<rect x="1041" y="223" width="1" height="15" fill="#cf4a1a"/>
<rect x="1042" y="235" width="1" height="1" fill="#cf4a1a"/>
<rect x="1043" y="232" width="1" height="8" fill="#3a4490"/>
<rect x="1044" y="233" width="1" height="1" fill="#3a4490"/>
<rect x="1045" y="225" width="1" height="10" fill="#3a4490"/>
<rect x="1046" y="227" width="1" height="1" fill="#3a4490"/>
<rect x="1047" y="226" width="1" height="5" fill="#3a4490"/>
<rect x="1048" y="227" width="1" height="1" fill="#3a4490"/>
<rect x="1050" y="226" width="1" height="4" fill="#3a4490"/>
<rect x="1051" y="227" width="1" height="1" fill="#3a4490"/>
<rect x="1052" y="224" width="1" height="4" fill="#3a4490"/>
<rect x="1053" y="225" width="1" height="1" fill="#3a4490"/>
<rect x="1054" y="212" width="1" height="15" fill="#3a4490"/>
<rect x="1055" y="214" width="1" height="1" fill="#3a4490"/>
<rect x="1056" y="210" width="1" height="14" fill="#cf4a1a"/>
<rect x="1057" y="221" width="1" height="1" fill="#cf4a1a"/>
<rect x="1058" y="213" width="1" height="7" fill="#3a4490"/>
<rect x="1059" y="214" width="1" height="1" fill="#3a4490"/>
<rect x="1060" y="212" width="1" height="8" fill="#cf4a1a"/>
<rect x="1061" y="218" width="1" height="1" fill="#cf4a1a"/>
<rect x="1062" y="217" width="1" height="9" fill="#cf4a1a"/>
<rect x="1063" y="224" width="1" height="1" fill="#cf4a1a"/>
<rect x="1065" y="217" width="1" height="8" fill="#cf4a1a"/>
<rect x="1066" y="223" width="1" height="1" fill="#cf4a1a"/>
<rect x="1067" y="217" width="1" height="7" fill="#cf4a1a"/>
<rect x="1068" y="222" width="1" height="1" fill="#cf4a1a"/>
<rect x="1069" y="222" width="1" height="8" fill="#cf4a1a"/>
<rect x="1070" y="228" width="1" height="1" fill="#cf4a1a"/>
<rect x="1071" y="226" width="1" height="4" fill="#cf4a1a"/>
<rect x="1072" y="228" width="1" height="1" fill="#cf4a1a"/>
<rect x="1073" y="221" width="1" height="11" fill="#3a4490"/>
<rect x="1074" y="223" width="1" height="1" fill="#3a4490"/>
<rect x="1075" y="204" width="1" height="20" fill="#3a4490"/>
<rect x="1076" y="207" width="1" height="1" fill="#3a4490"/>
<rect x="1078" y="194" width="1" height="13" fill="#3a4490"/>
<rect x="1079" y="196" width="1" height="1" fill="#3a4490"/>
<rect x="1080" y="194" width="1" height="7" fill="#cf4a1a"/>
<rect x="1081" y="199" width="1" height="1" fill="#cf4a1a"/>
<rect x="1082" y="201" width="1" height="9" fill="#cf4a1a"/>
<rect x="1083" y="208" width="1" height="1" fill="#cf4a1a"/>
<rect x="1084" y="199" width="1" height="8" fill="#cf4a1a"/>
<rect x="1085" y="205" width="1" height="1" fill="#cf4a1a"/>
<rect x="1086" y="196" width="1" height="11" fill="#cf4a1a"/>
<rect x="1087" y="204" width="1" height="1" fill="#cf4a1a"/>
<rect x="1088" y="200" width="1" height="10" fill="#cf4a1a"/>
<rect x="1089" y="207" width="1" height="1" fill="#cf4a1a"/>
<rect x="1091" y="205" width="1" height="6" fill="#cf4a1a"/>
<rect x="1092" y="209" width="1" height="1" fill="#cf4a1a"/>
<rect x="1093" y="207" width="1" height="8" fill="#3a4490"/>
<rect x="1094" y="208" width="1" height="1" fill="#3a4490"/>
<rect x="1096" y="202" width="1" height="8" fill="#3a4490"/>
<rect x="1097" y="203" width="1" height="1" fill="#3a4490"/>
<rect x="1098" y="202" width="1" height="6" fill="#3a4490"/>
<rect x="1099" y="203" width="1" height="1" fill="#3a4490"/>
<rect x="1100" y="201" width="1" height="6" fill="#3a4490"/>
<rect x="1101" y="202" width="1" height="1" fill="#3a4490"/>
<rect x="1103" y="197" width="1" height="9" fill="#3a4490"/>
<rect x="1104" y="198" width="1" height="1" fill="#3a4490"/>
<rect x="1106" y="195" width="1" height="11" fill="#cf4a1a"/>
<rect x="1107" y="203" width="1" height="1" fill="#cf4a1a"/>
<rect x="1108" y="200" width="1" height="7" fill="#3a4490"/>
<rect x="1109" y="201" width="1" height="1" fill="#3a4490"/>
<rect x="1110" y="201" width="1" height="12" fill="#cf4a1a"/>
<rect x="1111" y="210" width="1" height="1" fill="#cf4a1a"/>
<rect x="1112" y="215" width="1" height="14" fill="#cf4a1a"/>
<rect x="1113" y="226" width="1" height="1" fill="#cf4a1a"/>
<rect x="1115" y="220" width="1" height="8" fill="#cf4a1a"/>
<rect x="1116" y="226" width="1" height="1" fill="#cf4a1a"/>
<rect x="1116" y="221" width="1" height="10" fill="#cf4a1a"/>
<rect x="1117" y="228" width="1" height="1" fill="#cf4a1a"/>
<rect x="1119" y="226" width="1" height="8" fill="#cf4a1a"/>
<rect x="1120" y="232" width="1" height="1" fill="#cf4a1a"/>
<rect x="1121" y="227" width="1" height="6" fill="#cf4a1a"/>
<rect x="1122" y="231" width="1" height="1" fill="#cf4a1a"/>
<rect x="1123" y="210" width="1" height="21" fill="#3a4490"/>
<rect x="1124" y="213" width="1" height="1" fill="#3a4490"/>
<rect x="1125" y="208" width="1" height="13" fill="#3a4490"/>
<rect x="1126" y="210" width="1" height="1" fill="#3a4490"/>
<rect x="1127" y="202" width="1" height="9" fill="#3a4490"/>
<rect x="1128" y="203" width="1" height="1" fill="#3a4490"/>
<rect x="1129" y="202" width="1" height="13" fill="#3a4490"/>
<rect x="1130" y="204" width="1" height="1" fill="#3a4490"/>
<rect x="1132" y="204" width="1" height="11" fill="#cf4a1a"/>
<rect x="1133" y="212" width="1" height="1" fill="#cf4a1a"/>
<rect x="1134" y="203" width="1" height="8" fill="#cf4a1a"/>
<rect x="1135" y="209" width="1" height="1" fill="#cf4a1a"/>
<rect x="1136" y="209" width="1" height="11" fill="#cf4a1a"/>
<rect x="1137" y="217" width="1" height="1" fill="#cf4a1a"/>
<rect x="1138" y="216" width="1" height="9" fill="#cf4a1a"/>
<rect x="1139" y="223" width="1" height="1" fill="#cf4a1a"/>
<rect x="1140" y="218" width="1" height="11" fill="#cf4a1a"/>
<rect x="1141" y="226" width="1" height="1" fill="#cf4a1a"/>
<rect x="1142" y="219" width="1" height="7" fill="#3a4490"/>
<rect x="1143" y="220" width="1" height="1" fill="#3a4490"/>
<rect x="1144" y="212" width="1" height="9" fill="#3a4490"/>
<rect x="1145" y="213" width="1" height="1" fill="#3a4490"/>
<rect x="1147" y="211" width="1" height="9" fill="#3a4490"/>
<rect x="1148" y="212" width="1" height="1" fill="#3a4490"/>
<rect x="1149" y="207" width="1" height="11" fill="#cf4a1a"/>
<rect x="1150" y="215" width="1" height="1" fill="#cf4a1a"/>
<rect x="1151" y="212" width="1" height="12" fill="#cf4a1a"/>
<rect x="1152" y="221" width="1" height="1" fill="#cf4a1a"/>
<rect x="1153" y="211" width="1" height="9" fill="#cf4a1a"/>
<rect x="1154" y="218" width="1" height="1" fill="#cf4a1a"/>
<rect x="1155" y="217" width="1" height="7" fill="#cf4a1a"/>
<rect x="1156" y="222" width="1" height="1" fill="#cf4a1a"/>
<rect x="1158" y="219" width="1" height="5" fill="#cf4a1a"/>
<rect x="1159" y="222" width="1" height="1" fill="#cf4a1a"/>
<rect x="1160" y="222" width="1" height="6" fill="#cf4a1a"/>
<rect x="1161" y="226" width="1" height="1" fill="#cf4a1a"/>
<rect x="1162" y="225" width="1" height="7" fill="#cf4a1a"/>
<rect x="1163" y="230" width="1" height="1" fill="#cf4a1a"/>
<rect x="1165" y="227" width="1" height="7" fill="#cf4a1a"/>
<rect x="1166" y="232" width="1" height="1" fill="#cf4a1a"/>
<rect x="1167" y="229" width="1" height="16" fill="#cf4a1a"/>
<rect x="1168" y="242" width="1" height="1" fill="#cf4a1a"/>
<rect x="1168" y="244" width="1" height="16" fill="#cf4a1a"/>
<rect x="1169" y="257" width="1" height="1" fill="#cf4a1a"/>
<rect x="1170" y="254" width="1" height="9" fill="#3a4490"/>
<rect x="1171" y="255" width="1" height="1" fill="#3a4490"/>
<rect x="1173" y="256" width="1" height="9" fill="#cf4a1a"/>
<rect x="1174" y="263" width="1" height="1" fill="#cf4a1a"/>
<rect x="1176" y="258" width="1" height="17" fill="#cf4a1a"/>
<rect x="1177" y="271" width="1" height="1" fill="#cf4a1a"/>
<rect x="1177" y="266" width="1" height="12" fill="#cf4a1a"/>
<rect x="1178" y="275" width="1" height="1" fill="#cf4a1a"/>
<rect x="1179" y="275" width="1" height="9" fill="#cf4a1a"/>
<rect x="1180" y="282" width="1" height="1" fill="#cf4a1a"/>
<rect x="1182" y="277" width="1" height="11" fill="#3a4490"/>
<rect x="1183" y="279" width="1" height="1" fill="#3a4490"/>
<rect x="1183" y="278" width="1" height="6" fill="#3a4490"/>
<rect x="1184" y="279" width="1" height="1" fill="#3a4490"/>
<rect x="1186" y="276" width="1" height="9" fill="#3a4490"/>
<rect x="1187" y="277" width="1" height="1" fill="#3a4490"/>
<rect x="1188" y="275" width="1" height="11" fill="#cf4a1a"/>
<rect x="1189" y="283" width="1" height="1" fill="#cf4a1a"/>
<rect x="1190" y="276" width="1" height="11" fill="#cf4a1a"/>
<rect x="1191" y="284" width="1" height="1" fill="#cf4a1a"/>
<rect x="1192" y="270" width="1" height="10" fill="#3a4490"/>
<rect x="1193" y="272" width="1" height="1" fill="#3a4490"/>
<rect x="1194" y="270" width="1" height="12" fill="#cf4a1a"/>
<rect x="1195" y="279" width="1" height="1" fill="#cf4a1a"/>
<rect x="1196" y="281" width="1" height="8" fill="#cf4a1a"/>
<rect x="1197" y="287" width="1" height="1" fill="#cf4a1a"/>
<rect x="1199" y="288" width="1" height="8" fill="#cf4a1a"/>
<rect x="1200" y="294" width="1" height="1" fill="#cf4a1a"/>
<rect x="1201" y="288" width="1" height="9" fill="#cf4a1a"/>
<rect x="1202" y="295" width="1" height="1" fill="#cf4a1a"/>
<rect x="1203" y="289" width="1" height="9" fill="#cf4a1a"/>
<rect x="1204" y="296" width="1" height="1" fill="#cf4a1a"/>
<rect x="1205" y="291" width="1" height="11" fill="#3a4490"/>
<rect x="1206" y="293" width="1" height="1" fill="#3a4490"/>
<rect x="1207" y="285" width="1" height="8" fill="#3a4490"/>
<rect x="1208" y="286" width="1" height="1" fill="#3a4490"/>
<rect x="1209" y="275" width="1" height="11" fill="#3a4490"/>
<rect x="1210" y="277" width="1" height="1" fill="#3a4490"/>
<rect x="1211" y="270" width="1" height="5" fill="#3a4490"/>
<rect x="1212" y="271" width="1" height="1" fill="#3a4490"/>
<rect x="1214" y="272" width="1" height="6" fill="#cf4a1a"/>
<rect x="1215" y="276" width="1" height="1" fill="#cf4a1a"/>
<rect x="1216" y="272" width="1" height="6" fill="#3a4490"/>
<rect x="1217" y="273" width="1" height="1" fill="#3a4490"/>
<rect x="1218" y="262" width="1" height="12" fill="#3a4490"/>
<rect x="1219" y="264" width="1" height="1" fill="#3a4490"/>
<rect x="1220" y="280" width="1" height="10" fill="#cf4a1a"/>
<rect x="1221" y="287" width="1" height="1" fill="#cf4a1a"/>
<rect x="1222" y="280" width="1" height="7" fill="#3a4490"/>
<rect x="1223" y="281" width="1" height="1" fill="#3a4490"/>
<rect x="1225" y="276" width="1" height="8" fill="#3a4490"/>
<rect x="1226" y="277" width="1" height="1" fill="#3a4490"/>
<rect x="1227" y="282" width="1" height="6" fill="#cf4a1a"/>
<rect x="1228" y="286" width="1" height="1" fill="#cf4a1a"/>
<rect x="1229" y="286" width="1" height="6" fill="#cf4a1a"/>
<rect x="1230" y="290" width="1" height="1" fill="#cf4a1a"/>
<rect x="1231" y="296" width="1" height="10" fill="#cf4a1a"/>
<rect x="1232" y="303" width="1" height="1" fill="#cf4a1a"/>
<rect x="1233" y="299" width="1" height="15" fill="#cf4a1a"/>
<rect x="1234" y="311" width="1" height="1" fill="#cf4a1a"/>
<rect x="1235" y="303" width="1" height="7" fill="#3a4490"/>
<rect x="1236" y="304" width="1" height="1" fill="#3a4490"/>
<rect x="1237" y="289" width="1" height="16" fill="#3a4490"/>
<rect x="1238" y="291" width="1" height="1" fill="#3a4490"/>
<rect x="1240" y="282" width="1" height="10" fill="#3a4490"/>
<rect x="1241" y="284" width="1" height="1" fill="#3a4490"/>
<rect x="1242" y="275" width="1" height="9" fill="#3a4490"/>
<rect x="1243" y="276" width="1" height="1" fill="#3a4490"/>
<rect x="1244" y="263" width="1" height="9" fill="#3a4490"/>
<rect x="1245" y="264" width="1" height="1" fill="#3a4490"/>
<rect x="1247" y="264" width="1" height="8" fill="#cf4a1a"/>
<rect x="1248" y="270" width="1" height="1" fill="#cf4a1a"/>
<rect x="1249" y="267" width="1" height="7" fill="#cf4a1a"/>
<rect x="1250" y="272" width="1" height="1" fill="#cf4a1a"/>
<rect x="1251" y="271" width="1" height="6" fill="#cf4a1a"/>
<rect x="1252" y="275" width="1" height="1" fill="#cf4a1a"/>
<rect x="1253" y="274" width="1" height="5" fill="#cf4a1a"/>
<rect x="1254" y="277" width="1" height="1" fill="#cf4a1a"/>
<rect x="1256" y="274" width="1" height="4" fill="#3a4490"/>
<rect x="1257" y="275" width="1" height="1" fill="#3a4490"/>
<rect x="1258" y="273" width="1" height="5" fill="#3a4490"/>
<rect x="1259" y="274" width="1" height="1" fill="#3a4490"/>
<rect x="1260" y="271" width="1" height="7" fill="#3a4490"/>
<rect x="1261" y="272" width="1" height="1" fill="#3a4490"/>
<rect x="1261" y="273" width="1" height="11" fill="#cf4a1a"/>
<rect x="1262" y="281" width="1" height="1" fill="#cf4a1a"/>
<rect x="1263" y="282" width="1" height="9" fill="#cf4a1a"/>
<rect x="1264" y="289" width="1" height="1" fill="#cf4a1a"/>
<rect x="1265" y="271" width="1" height="18" fill="#3a4490"/>
<rect x="1266" y="274" width="1" height="1" fill="#3a4490"/>
<rect x="1268" y="255" width="1" height="18" fill="#3a4490"/>
<rect x="1269" y="258" width="1" height="1" fill="#3a4490"/>
<rect x="428" y="68" width="852" height="1" fill="#3a4490"/>
<rect x="428" y="161" width="852" height="1" fill="#3a4490"/>
<rect x="428" y="191" width="852" height="1" fill="#3a4490"/>
<rect x="428" y="220" width="852" height="1" fill="#3a4490"/>
<rect x="428" y="255" width="852" height="1" fill="#3a4490"/>
<rect x="428" y="314" width="852" height="1" fill="#3a4490"/>
</g>
<polyline points="2.9,554.1 7.6,559.8 11.0,564.6 14.3,558.8 16.7,553.1 20.0,531.3 22.8,527.1 25.7,526.5 28.5,524.0 33.3,529.7 35.2,527.1 37.1,525.6 39.9,521.8 44.7,521.8 46.2,518.5 48.5,527.8 50.4,537.0 52.3,529.4 54.2,537.0 56.1,539.8 59.9,542.7 63.7,544.6 66.6,552.2 69.4,533.5 73.2,531.3 76.1,526.1 78.0,534.7 79.9,534.7 82.7,525.6 87.5,515.7 89.4,523.7 91.3,520.8 94.2,533.2 97.0,541.7 99.9,542.3 102.3,536.0 104.6,542.7 106.5,550.3 108.4,551.2 110.7,557.9 114.1,557.5 118.9,557.9 122.7,547.4 125.5,546.5 127.4,543.6 129.4,531.3 130.3,514.1 131.3,520.8 133.2,518.9 136.6,508.4 139.2,503.1 141.7,512.2 145.5,519.5 148.4,517.6 151.2,512.2 154.1,515.1 156.9,515.1 161.7,507.5 167.4,495.1 169.3,501.8 171.8,509.4 174.1,502.7 176.9,497.0 179.8,501.8 183.6,499.9 188.3,487.1 190.2,494.2 194.0,501.8 196.9,503.7 201.3,516.0 205.4,506.5 209.2,507.5 212.7,515.7 215.9,511.3 218.4,514.1 220.7,509.4 223.0,503.1 226.0,506.2 229.3,504.6 231.7,512.2 235.0,510.7 239.7,512.2 245.4,517.9 249.2,527.5 251.1,522.7 254.0,519.8 257.8,508.1 260.7,511.3 264.8,518.9 268.3,510.7 270.5,521.8 274.0,527.8 277.4,532.8 280.2,527.5 283.5,531.6 290.1,533.5 293.0,529.4 295.8,512.2 298.1,494.2 300.6,505.0 303.5,506.2 306.3,501.2 309.2,503.7 311.6,512.2 313.5,508.4 316.8,511.3 318.7,509.4 320.6,517.0 322.5,516.0 324.4,523.3 326.3,518.3 328.2,522.7 331.4,524.6 333.3,529.7 335.8,538.9 339.6,541.2 341.5,549.3 344.4,560.2 346.3,549.3 349.1,545.5 352.9,544.6 357.7,539.8 359.9,541.7 362.4,553.1 364.3,558.8 367.6,562.1 370.0,553.1 372.9,539.8 375.2,537.3 377.6,539.8 380.5,548.4 382.4,542.7 385.2,545.0 387.2,551.2 389.1,530.3 390.4,536.0 392.9,527.8 394.8,530.9 400.5,522.7 402.4,524.0 404.3,522.1 408.1,507.5 410.9,502.3 415.7,510.3 418.5,505.6 421.4,509.4 424.2,503.7 428.4,490.4 430.0,497.0 431.5,508.4 432.9,513.2 434.8,511.3 436.7,514.1 439.1,522.1 441.4,524.2 443.3,516.0 445.2,520.8 447.1,518.3 449.6,521.4 452.4,529.7 454.7,527.1 458.2,533.2 461.4,531.6 464.2,535.1 469.0,544.2 471.8,545.0 477.6,555.0 480.4,538.9 482.9,536.0 484.8,537.3 486.5,545.0 489.0,543.1 490.9,544.2 493.3,557.9 495.6,567.4 497.0,561.7 498.9,564.0 501.3,554.5 503.2,558.3 508.0,558.5 511.8,562.6 516.2,569.3 519.0,563.2 521.3,553.1 523.6,542.7 525.1,542.7 527.0,548.0 529.3,550.3 531.8,545.0 534.2,543.6 536.5,536.0 538.8,531.3 542.2,541.2 546.0,534.1 549.5,529.4 551.4,538.9 553.3,532.8 555.9,537.9 559.4,542.7 562.6,550.3 566.0,545.5 568.5,536.6 572.3,533.5 575.5,540.4 579.3,536.0 581.2,539.3 583.7,532.8 586.0,529.7 590.7,534.1 593.6,529.0 598.3,521.8 600.2,527.1 603.1,542.7 605.4,551.2 608.8,548.4 611.7,553.1 614.5,553.7 616.4,551.8 618.3,544.6 620.2,549.3 622.5,549.3 625.0,543.6 628.8,525.6 631.6,523.7 634.5,522.7 636.8,517.0 639.2,507.5 641.5,512.2 644.4,524.6 646.3,514.1 648.8,512.6 652.6,506.9 656.4,506.2 659.3,506.9 661.2,513.2 663.1,513.8 665.0,522.7 667.4,534.1 669.7,534.7 673.5,540.8 677.7,538.5 680.2,542.7 683.0,548.4 685.3,558.8 687.2,557.9 689.3,564.6 691.6,557.9 693.5,551.2 695.4,556.9 698.3,546.5 700.2,551.2 704.3,546.9 707.8,537.0 711.2,531.3 713.9,527.5 716.9,529.0 719.6,541.7 721.5,543.6 723.9,556.9 725.8,565.5 728.7,573.1 734.4,578.4 736.3,576.0 739.2,574.1 741.4,566.5 743.9,568.4 746.2,569.7 749.2,569.3 752.5,564.6 755.3,551.2 758.2,538.9 760.5,529.4 762.0,536.6 763.9,536.0 765.8,537.9 767.7,539.3 769.6,536.0 771.5,536.6 773.4,530.3 775.3,528.4 778.2,526.5 780.4,523.7 782.3,533.2 784.2,534.1 786.1,529.4 788.0,537.0 789.9,533.5 793.4,544.2 795.3,537.9 797.6,528.4 800.0,530.3 803.3,534.7 806.7,529.4 808.6,529.4 810.9,532.2 812.8,530.9 814.7,523.3 817.2,532.2 819.1,536.0 821.5,532.8 824.8,534.7 827.6,540.4 831.4,549.9 833.3,551.2 836.2,552.6 838.1,557.9 840.4,569.3 841.9,550.3 843.8,528.4 846.6,524.6 850.4,522.1 852.3,523.3 855.2,530.3 857.7,532.2 860.3,537.0 862.3,534.7 864.2,537.0 866.1,529.4 868.0,538.9 870.5,548.4 872.9,545.0 875.6,544.6 878.1,538.5 880.0,539.8 881.9,549.3 883.4,555.0 885.7,533.2 888.5,523.3 891.4,525.9 894.2,536.0 896.1,527.1 898.6,534.1 900.9,535.1 905.3,523.3 907.2,525.2 909.5,537.0 911.4,530.3 915.2,522.7 918.0,514.1 920.3,509.4 922.4,524.6 925.6,535.1 929.4,541.2 933.2,533.2 935.1,532.8 937.6,527.5 939.5,529.4 942.2,526.5 946.6,528.4 952.8,534.7 955.1,532.2 958.9,544.6 961.8,548.4 963.7,545.5 965.6,548.4 970.3,537.0 972.2,540.4 975.1,532.8 977.9,532.8 980.2,541.2 985.5,533.5 987.4,537.3 989.4,532.8 991.3,538.9 995.1,543.1 1000.4,551.8 1002.7,548.4 1004.6,549.3 1006.5,546.5 1012.2,551.2 1013.7,548.8 1015.6,553.1 1018.8,544.6 1021.7,541.2 1026.4,541.2 1029.3,535.4 1031.2,535.1 1034.1,537.3 1037.3,541.2 1039.2,547.4 1041.7,559.4 1043.2,557.9 1045.5,548.0 1047.9,546.5 1050.2,546.1 1051.7,542.7 1054.4,525.6 1055.9,534.1 1057.8,528.4 1060.1,533.2 1062.6,539.3 1065.1,535.4 1067.3,537.3 1069.2,542.7 1071.5,545.5 1073.4,534.1 1075.3,520.8 1078.2,513.6 1081.4,521.4 1084.3,524.6 1086.2,525.2 1091.3,533.5 1097.6,525.6 1099.5,525.6 1103.3,519.5 1106.5,528.4 1108.0,527.1 1109.9,535.1 1112.2,547.4 1116.6,556.0 1121.4,556.4 1123.3,533.2 1127.1,525.6 1129.3,534.7 1132.2,527.5 1135.6,539.8 1137.5,542.7 1140.4,548.0 1144.6,536.0 1147.0,533.5 1150.8,540.4 1153.1,540.4 1155.6,545.0 1159.4,546.1 1162.3,553.1 1164.2,555.0 1168.0,570.3 1170.8,571.2 1174.2,576.0 1178.4,582.2 1182.2,576.9 1184.1,577.9 1186.6,571.2 1188.3,575.0 1190.8,565.5 1192.7,556.4 1195.2,563.6 1198.4,567.0 1201.3,567.4 1203.2,570.3 1205.4,564.6 1207.3,554.1 1209.8,542.7 1211.7,541.2 1214.6,545.0 1217.4,538.5 1218.8,534.7 1220.7,549.9 1222.6,546.1 1225.6,548.8 1228.3,551.8 1231.3,560.2 1233.2,566.5 1235.1,558.8 1238.3,539.8 1241.2,533.2 1244.6,527.1 1246.9,530.9 1252.6,536.0 1259.3,533.2 1261.2,541.7 1263.5,547.4 1265.9,530.3 1268.8,523.3" fill="none" stroke="#cf4a1a" stroke-width="1" shape-rendering="crispEdges"/>
<text x="1324.3" y="60.2" font-size="11" fill="#000" text-anchor="end" >16</text>
<text x="1324.3" y="92.2" font-size="11" fill="#000" text-anchor="end" >15</text>
<text x="1324.3" y="125.2" font-size="11" fill="#000" text-anchor="end" >14</text>
<text x="1324.3" y="158.2" font-size="11" fill="#000" text-anchor="end" >13</text>
<text x="1324.3" y="191.2" font-size="11" fill="#000" text-anchor="end" >12</text>
<text x="1324.3" y="224.2" font-size="11" fill="#000" text-anchor="end" >11</text>
<text x="1324.3" y="257.2" font-size="11" fill="#000" text-anchor="end" >10</text>
<text x="1324.3" y="290.2" font-size="11" fill="#000" text-anchor="end" >9</text>
<text x="1324.3" y="323.2" font-size="11" fill="#000" text-anchor="end" >8</text>
<text x="1324.3" y="356.2" font-size="11" fill="#000" text-anchor="end" >7</text>
<text x="1324.3" y="388.2" font-size="11" fill="#000" text-anchor="end" >6</text>
<text x="1324.3" y="421.2" font-size="11" fill="#000" text-anchor="end" >5</text>
<text x="1324.3" y="498.2" font-size="11" fill="#000" text-anchor="end" >80</text>
<text x="1324.3" y="526.2" font-size="11" fill="#000" text-anchor="end" >60</text>
<text x="1324.3" y="554.2" font-size="11" fill="#000" text-anchor="end" >40</text>
<text x="36" y="604.7" font-size="12" fill="#000" text-anchor="start" >May</text>
<text x="83" y="604.7" font-size="12" fill="#000" text-anchor="start" >Jun</text>
<text x="126" y="604.7" font-size="12" fill="#000" text-anchor="start" >Jul</text>
<text x="176" y="604.7" font-size="12" fill="#000" text-anchor="start" >Ago</text>
<text x="224" y="604.7" font-size="12" fill="#000" text-anchor="start" >Sep</text>
<text x="269" y="604.7" font-size="12" fill="#000" text-anchor="start" >Oct</text>
<text x="319" y="604.7" font-size="12" fill="#000" text-anchor="start" >Nov</text>
<text x="364" y="604.7" font-size="12" fill="#000" text-anchor="start" >Dic</text>
<text x="407" y="604.7" font-size="12" fill="#000" text-anchor="start" >2014</text>
<text x="455" y="604.7" font-size="12" fill="#000" text-anchor="start" >Feb</text>
<text x="498" y="604.7" font-size="12" fill="#000" text-anchor="start" >Mar</text>
<text x="543" y="604.7" font-size="12" fill="#000" text-anchor="start" >Abr</text>
<text x="586" y="604.7" font-size="12" fill="#000" text-anchor="start" >May</text>
<text x="632" y="604.7" font-size="12" fill="#000" text-anchor="start" >Jun</text>
<text x="677" y="604.7" font-size="12" fill="#000" text-anchor="start" >Jul</text>
<text x="727" y="604.7" font-size="12" fill="#000" text-anchor="start" >Ago</text>
<text x="772" y="604.7" font-size="12" fill="#000" text-anchor="start" >Sep</text>
<text x="819" y="604.7" font-size="12" fill="#000" text-anchor="start" >Oct</text>
<text x="869" y="604.7" font-size="12" fill="#000" text-anchor="start" >Nov</text>
<text x="912" y="604.7" font-size="12" fill="#000" text-anchor="start" >Dic</text>
<text x="958" y="604.7" font-size="12" fill="#000" text-anchor="start" >2015</text>
<text x="1003" y="604.7" font-size="12" fill="#000" text-anchor="start" >Feb</text>
<text x="1046" y="604.7" font-size="12" fill="#000" text-anchor="start" >Mar</text>
<text x="1094" y="604.7" font-size="12" fill="#000" text-anchor="start" >Abr</text>
<text x="1137" y="604.7" font-size="12" fill="#000" text-anchor="start" >May</text>
<text x="1180" y="604.7" font-size="12" fill="#000" text-anchor="start" >Jun</text>
<text x="1227" y="604.7" font-size="12" fill="#000" text-anchor="start" >Jul</text>
<text x="397.7" y="74" font-size="10.8" fill="#3f4aa8" text-anchor="start" >100.0</text>
<text x="397.7" y="167" font-size="10.8" fill="#3f4aa8" text-anchor="start" >61.8</text>
<text x="397.7" y="197" font-size="10.8" fill="#3f4aa8" text-anchor="start" >50.0</text>
<text x="397.7" y="226" font-size="10.8" fill="#3f4aa8" text-anchor="start" >38.2</text>
<text x="397.7" y="261" font-size="10.8" fill="#3f4aa8" text-anchor="start" >23.6</text>
<text x="397.7" y="320" font-size="10.8" fill="#3f4aa8" text-anchor="start" >0.0</text>
<text x="19.6" y="11" font-size="10" fill="#333c9c" text-anchor="start" textLength="157.4" lengthAdjust="spacingAndGlyphs">FCC (M ) (9.430, 9.900, 9.381, 9.775)</text>
<text x="19.6" y="472.2" font-size="10" fill="#cc4a1e" text-anchor="start" textLength="165.2" lengthAdjust="spacingAndGlyphs">RSI (Relative Strength Index) (60.0950)</text>
<rect x="1282" y="253" width="29" height="14" fill="#3b4493" shape-rendering="crispEdges"/>
<text x="1282.6" y="264.1" font-size="11" fill="#fff" text-anchor="start" >9.775</text>
<rect x="1282" y="515" width="29" height="14" fill="#c8461c" shape-rendering="crispEdges"/>
<text x="1282.6" y="526.1" font-size="11" fill="#fff" text-anchor="start" >60.10</text>
<g shape-rendering="crispEdges"><rect x="4" y="3" width="12" height="11" fill="#fff"/><rect x="4" y="3" width="12" height="1" fill="#70777d"/><rect x="4" y="13" width="12" height="1" fill="#70777d"/><rect x="15" y="3" width="1" height="11" fill="#70777d"/>
<rect x="6" y="5" width="4" height="7" fill="#3a9a78"/><rect x="6" y="5" width="4" height="2" fill="#3a80b0"/><rect x="14" y="5" width="1" height="3" fill="#2a60c0"/><rect x="14" y="8" width="1" height="1" fill="#30a040"/></g>
<g shape-rendering="crispEdges"><rect x="4" y="464" width="12" height="11" fill="#fff"/><rect x="4" y="464" width="12" height="1" fill="#70777d"/><rect x="4" y="474" width="12" height="1" fill="#70777d"/><rect x="15" y="464" width="1" height="11" fill="#70777d"/>
<rect x="6" y="466" width="4" height="7" fill="#3a9a78"/><rect x="6" y="466" width="4" height="2" fill="#3a80b0"/><rect x="14" y="466" width="1" height="3" fill="#2a60c0"/><rect x="14" y="469" width="1" height="1" fill="#30a040"/></g>
<g shape-rendering="crispEdges"><rect x="1302" y="4" width="12" height="10" fill="#f4f4f4"/><rect x="1313" y="4" width="1" height="10" fill="#707070"/><rect x="1302" y="13" width="12" height="1" fill="#707070"/><rect x="1312" y="5" width="1" height="8" fill="#a8a8a8"/><rect x="1303" y="12" width="10" height="1" fill="#a8a8a8"/>
<rect x="1305" y="6" width="6" height="5" fill="#000"/><rect x="1306" y="8" width="4" height="2" fill="#fff"/></g>
<g shape-rendering="crispEdges"><rect x="1316" y="4" width="12" height="10" fill="#f4f4f4"/><rect x="1327" y="4" width="1" height="10" fill="#707070"/><rect x="1316" y="13" width="12" height="1" fill="#707070"/><rect x="1326" y="5" width="1" height="8" fill="#a8a8a8"/><rect x="1317" y="12" width="10" height="1" fill="#a8a8a8"/>
</g><path d="M1319 6l5 5m0 -5l-5 5" stroke="#000" stroke-width="0.95" fill="none"/>
<g shape-rendering="crispEdges"><rect x="1302" y="465" width="12" height="10" fill="#f4f4f4"/><rect x="1313" y="465" width="1" height="10" fill="#707070"/><rect x="1302" y="474" width="12" height="1" fill="#707070"/><rect x="1312" y="466" width="1" height="8" fill="#a8a8a8"/><rect x="1303" y="473" width="10" height="1" fill="#a8a8a8"/>
<rect x="1305" y="467" width="6" height="5" fill="#000"/><rect x="1306" y="469" width="4" height="2" fill="#fff"/></g>
<g shape-rendering="crispEdges"><rect x="1316" y="465" width="12" height="10" fill="#f4f4f4"/><rect x="1327" y="465" width="1" height="10" fill="#707070"/><rect x="1316" y="474" width="12" height="1" fill="#707070"/><rect x="1326" y="466" width="1" height="8" fill="#a8a8a8"/><rect x="1317" y="473" width="10" height="1" fill="#a8a8a8"/>
</g><path d="M1319 467l5 5m0 -5l-5 5" stroke="#000" stroke-width="0.95" fill="none"/>
</svg></body></html>
